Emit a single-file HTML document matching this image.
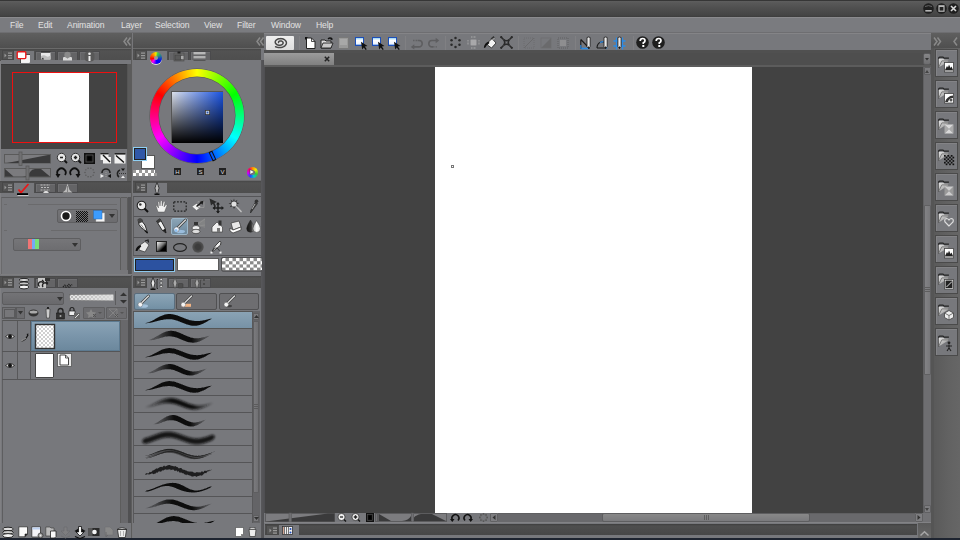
<!DOCTYPE html>
<html><head><meta charset="utf-8"><style>
*{margin:0;padding:0;box-sizing:border-box}
html,body{width:960px;height:540px;overflow:hidden;background:#1e2430;font-family:"Liberation Sans",sans-serif}
.a{position:absolute}
svg{position:absolute;overflow:visible}
</style></head><body>
<div class="a" style="left:0px;top:0px;width:960px;height:17px;background:linear-gradient(#363636 0,#363636 1px,#5e5e5e 1px,#585858 3px,#4c4c4c 10px,#454545 15px,#3c3c3c 17px)"></div>
<svg style="left:923px;top:3px" width="11" height="11" viewBox="0 0 11 11"><circle cx="5.5" cy="5.5" r="5.3" fill="#1f1f1f"/><path d="M2 3.5 Q5.5 1.8 9 3.5" stroke="#666" stroke-width="1" fill="none"/><rect x="2.3" y="7" width="6.4" height="1.6" fill="#b5b5b5"/></svg>
<svg style="left:935.5px;top:3px" width="11" height="11" viewBox="0 0 11 11"><circle cx="5.5" cy="5.5" r="5.3" fill="#1f1f1f"/><rect x="3" y="2.8" width="5" height="5.4" fill="#222" stroke="#b8b8b8" stroke-width="1.2"/><rect x="3" y="2.8" width="5" height="1.2" fill="#b8b8b8"/></svg>
<svg style="left:948px;top:3px" width="11" height="11" viewBox="0 0 11 11"><circle cx="5.5" cy="5.5" r="5.3" fill="#1f1f1f"/><path d="M3 3 L8 8 M8 3 L3 8" stroke="#d8d8d8" stroke-width="1.6"/></svg>
<div class="a" style="left:0px;top:17px;width:960px;height:16px;background:#7a7b7f;border-top:1px solid #8a8a8d;border-bottom:1px solid #6e6e71"></div>
<div class="a" style="left:10px;top:19.8px;font-size:8.6px;color:#e2e2e2;letter-spacing:-0.1px;line-height:11px">File</div>
<div class="a" style="left:38px;top:19.8px;font-size:8.6px;color:#e2e2e2;letter-spacing:-0.1px;line-height:11px">Edit</div>
<div class="a" style="left:67px;top:19.8px;font-size:8.6px;color:#e2e2e2;letter-spacing:-0.1px;line-height:11px">Animation</div>
<div class="a" style="left:121px;top:19.8px;font-size:8.6px;color:#e2e2e2;letter-spacing:-0.1px;line-height:11px">Layer</div>
<div class="a" style="left:155px;top:19.8px;font-size:8.6px;color:#e2e2e2;letter-spacing:-0.1px;line-height:11px">Selection</div>
<div class="a" style="left:204px;top:19.8px;font-size:8.6px;color:#e2e2e2;letter-spacing:-0.1px;line-height:11px">View</div>
<div class="a" style="left:237px;top:19.8px;font-size:8.6px;color:#e2e2e2;letter-spacing:-0.1px;line-height:11px">Filter</div>
<div class="a" style="left:271px;top:19.8px;font-size:8.6px;color:#e2e2e2;letter-spacing:-0.1px;line-height:11px">Window</div>
<div class="a" style="left:316px;top:19.8px;font-size:8.6px;color:#e2e2e2;letter-spacing:-0.1px;line-height:11px">Help</div>
<div class="a" style="left:0px;top:33px;width:131px;height:15px;background:linear-gradient(#5f5f5f,#4f4f4f)"></div>
<div class="a" style="left:133px;top:33px;width:131px;height:15px;background:linear-gradient(#5f5f5f,#4f4f4f)"></div>
<div class="a" style="left:931px;top:33px;width:29px;height:15px;background:linear-gradient(#5f5f5f,#4f4f4f)"></div>
<svg style="left:123px;top:37px" width="8" height="9" viewBox="0 0 8 9"><path d="M4 0.5 L1 4.5 L4 8.5 M7.5 0.5 L4.5 4.5 L7.5 8.5" stroke="#8a8a8a" stroke-width="1.5" fill="none"/></svg>
<svg style="left:256px;top:37px" width="8" height="9" viewBox="0 0 8 9"><path d="M4 0.5 L1 4.5 L4 8.5 M7.5 0.5 L4.5 4.5 L7.5 8.5" stroke="#8a8a8a" stroke-width="1.5" fill="none"/></svg>
<svg style="left:933px;top:37px" width="8" height="9" viewBox="0 0 8 9"><path d="M1 0.5 L4 4.5 L1 8.5 M4.5 0.5 L7.5 4.5 L4.5 8.5" stroke="#8a8a8a" stroke-width="1.5" fill="none"/></svg>
<svg style="left:953px;top:37px" width="5" height="9" viewBox="0 0 5 9"><path d="M4 0.5 L1 4.5 L4 8.5" stroke="#8a8a8a" stroke-width="1.5" fill="none"/></svg>
<div class="a" style="left:0px;top:48px;width:131px;height:490px;background:#77787c;border-left:1px solid #808083"></div>
<div class="a" style="left:133px;top:48px;width:131px;height:490px;background:#77787c"></div>
<div class="a" style="left:131px;top:33px;width:2px;height:505px;background:#77777a;border-left:1px solid #5c5c5c"></div>
<div class="a" style="left:261px;top:60px;width:4px;height:478px;background:linear-gradient(90deg,#58585b,#4e4e51)"></div>
<div class="a" style="left:263.5px;top:33px;width:1.5px;height:33px;background:#6d6d6d"></div>
<div class="a" style="left:0px;top:48px;width:131px;height:1px;background:#6a6a6a"></div>
<div class="a" style="left:0px;top:49px;width:131px;height:12px;background:linear-gradient(#474747,#525252 2px,#4e4e4e)"></div>
<div class="a" style="left:1.5px;top:50px;width:12px;height:10px;background:#545454;border:1px solid #484848"></div>
<svg style="left:3px;top:51px" width="10" height="8" viewBox="0 0 10 8"><path d="M1.5 2.5 L3.5 4.5 L1.5 6.5Z" fill="#9a9a9a"/><rect x="5" y="1.5" width="4" height="1.2" fill="#9a9a9a"/><rect x="5" y="4" width="4" height="1.2" fill="#9a9a9a"/><rect x="5" y="6.5" width="4" height="1.2" fill="#9a9a9a"/></svg>
<div class="a" style="left:14px;top:50.5px;width:20px;height:12.5px;background:#77787c"></div>
<div class="a" style="left:35px;top:50.5px;width:21px;height:10px;background:#646466;border:1px solid #4a4a4c;box-shadow:inset 1px 1px 0 #6e6e70"></div>
<div class="a" style="left:57px;top:50.5px;width:21px;height:10px;background:#646466;border:1px solid #4a4a4c;box-shadow:inset 1px 1px 0 #6e6e70"></div>
<div class="a" style="left:79px;top:50.5px;width:21px;height:10px;background:#646466;border:1px solid #4a4a4c;box-shadow:inset 1px 1px 0 #6e6e70"></div>
<div class="a" style="left:0px;top:181px;width:131px;height:12px;background:linear-gradient(#474747,#525252 2px,#4e4e4e)"></div>
<div class="a" style="left:1.5px;top:182px;width:12px;height:10px;background:#545454;border:1px solid #484848"></div>
<svg style="left:3px;top:183px" width="10" height="8" viewBox="0 0 10 8"><path d="M1.5 2.5 L3.5 4.5 L1.5 6.5Z" fill="#9a9a9a"/><rect x="5" y="1.5" width="4" height="1.2" fill="#9a9a9a"/><rect x="5" y="4" width="4" height="1.2" fill="#9a9a9a"/><rect x="5" y="6.5" width="4" height="1.2" fill="#9a9a9a"/></svg>
<div class="a" style="left:14px;top:182.5px;width:20px;height:12.5px;background:#77787c"></div>
<div class="a" style="left:35px;top:182.5px;width:21px;height:10px;background:#646466;border:1px solid #4a4a4c;box-shadow:inset 1px 1px 0 #6e6e70"></div>
<div class="a" style="left:57px;top:182.5px;width:21px;height:10px;background:#646466;border:1px solid #4a4a4c;box-shadow:inset 1px 1px 0 #6e6e70"></div>
<div class="a" style="left:0px;top:276px;width:131px;height:12px;background:linear-gradient(#474747,#525252 2px,#4e4e4e)"></div>
<div class="a" style="left:1.5px;top:277px;width:12px;height:10px;background:#545454;border:1px solid #484848"></div>
<svg style="left:3px;top:278px" width="10" height="8" viewBox="0 0 10 8"><path d="M1.5 2.5 L3.5 4.5 L1.5 6.5Z" fill="#9a9a9a"/><rect x="5" y="1.5" width="4" height="1.2" fill="#9a9a9a"/><rect x="5" y="4" width="4" height="1.2" fill="#9a9a9a"/><rect x="5" y="6.5" width="4" height="1.2" fill="#9a9a9a"/></svg>
<div class="a" style="left:14px;top:277.5px;width:20px;height:12.5px;background:#77787c"></div>
<div class="a" style="left:35px;top:277.5px;width:21px;height:10px;background:#646466;border:1px solid #4a4a4c;box-shadow:inset 1px 1px 0 #6e6e70"></div>
<div class="a" style="left:57px;top:277.5px;width:21px;height:10px;background:#646466;border:1px solid #4a4a4c;box-shadow:inset 1px 1px 0 #6e6e70"></div>
<div class="a" style="left:133px;top:48px;width:128px;height:1px;background:#6a6a6a"></div>
<div class="a" style="left:133px;top:49px;width:128px;height:12px;background:linear-gradient(#474747,#525252 2px,#4e4e4e)"></div>
<div class="a" style="left:134.5px;top:50px;width:12px;height:10px;background:#545454;border:1px solid #484848"></div>
<svg style="left:136px;top:51px" width="10" height="8" viewBox="0 0 10 8"><path d="M1.5 2.5 L3.5 4.5 L1.5 6.5Z" fill="#9a9a9a"/><rect x="5" y="1.5" width="4" height="1.2" fill="#9a9a9a"/><rect x="5" y="4" width="4" height="1.2" fill="#9a9a9a"/><rect x="5" y="6.5" width="4" height="1.2" fill="#9a9a9a"/></svg>
<div class="a" style="left:147px;top:50.5px;width:20px;height:12.5px;background:#77787c"></div>
<div class="a" style="left:168px;top:50.5px;width:21px;height:10px;background:#646466;border:1px solid #4a4a4c;box-shadow:inset 1px 1px 0 #6e6e70"></div>
<div class="a" style="left:190px;top:50.5px;width:21px;height:10px;background:#646466;border:1px solid #4a4a4c;box-shadow:inset 1px 1px 0 #6e6e70"></div>
<div class="a" style="left:133px;top:181px;width:128px;height:12px;background:linear-gradient(#474747,#525252 2px,#4e4e4e)"></div>
<div class="a" style="left:134.5px;top:182px;width:12px;height:10px;background:#545454;border:1px solid #484848"></div>
<svg style="left:136px;top:183px" width="10" height="8" viewBox="0 0 10 8"><path d="M1.5 2.5 L3.5 4.5 L1.5 6.5Z" fill="#9a9a9a"/><rect x="5" y="1.5" width="4" height="1.2" fill="#9a9a9a"/><rect x="5" y="4" width="4" height="1.2" fill="#9a9a9a"/><rect x="5" y="6.5" width="4" height="1.2" fill="#9a9a9a"/></svg>
<div class="a" style="left:147px;top:182.5px;width:20px;height:12.5px;background:#77787c"></div>
<div class="a" style="left:133px;top:276px;width:128px;height:12px;background:linear-gradient(#474747,#525252 2px,#4e4e4e)"></div>
<div class="a" style="left:134.5px;top:277px;width:12px;height:10px;background:#545454;border:1px solid #484848"></div>
<svg style="left:136px;top:278px" width="10" height="8" viewBox="0 0 10 8"><path d="M1.5 2.5 L3.5 4.5 L1.5 6.5Z" fill="#9a9a9a"/><rect x="5" y="1.5" width="4" height="1.2" fill="#9a9a9a"/><rect x="5" y="4" width="4" height="1.2" fill="#9a9a9a"/><rect x="5" y="6.5" width="4" height="1.2" fill="#9a9a9a"/></svg>
<div class="a" style="left:147px;top:277.5px;width:20px;height:12.5px;background:#77787c"></div>
<div class="a" style="left:168px;top:277.5px;width:21px;height:10px;background:#646466;border:1px solid #4a4a4c;box-shadow:inset 1px 1px 0 #6e6e70"></div>
<div class="a" style="left:190px;top:277.5px;width:21px;height:10px;background:#646466;border:1px solid #4a4a4c;box-shadow:inset 1px 1px 0 #6e6e70"></div>
<div class="a" style="left:1px;top:60px;width:130px;height:4px;background:#77787c"></div>
<div class="a" style="left:1px;top:64px;width:126px;height:85px;background:#434343;border-top:1px solid #3a3a3a"></div>
<div class="a" style="left:127px;top:64px;width:4px;height:117px;background:#5b5b5b;border-left:1px solid #555"></div>
<div class="a" style="left:39px;top:73px;width:50px;height:70px;background:#fff"></div>
<div class="a" style="left:12px;top:72px;width:105px;height:71px;border:1.3px solid #ee1010"></div>
<svg style="left:4px;top:152px" width="47" height="14" viewBox="0 0 47 14"><rect x="0.5" y="2.5" width="46" height="8.5" fill="#7b7b7e" stroke="#5a5a5a"/><path d="M3 11 L44 3 L46 3 L46 11Z" fill="#3a3a3b"/><rect x="15" y="0" width="3" height="13.5" fill="#707072" stroke="#5a5a5a" stroke-width="0.8"/></svg>
<svg style="left:4px;top:166px" width="47" height="14" viewBox="0 0 47 14"><rect x="0.5" y="2.5" width="46" height="8.5" fill="#3a3a3b" stroke="#5a5a5a"/><path d="M1 3 L9.5 10.5 L18 10.5 Q24 10.5 26 6 Q28 3 31 3 Z M37 3 L46 10.5 V3Z" fill="#7b7b7e"/><rect x="22" y="0" width="3" height="14" fill="#707072" stroke="#5a5a5a" stroke-width="0.8"/></svg>
<svg style="left:56px;top:152px" width="12" height="12" viewBox="0 0 12 12"><circle cx="5.5" cy="5.5" r="4.2" fill="#e8e8e8" stroke="#333" stroke-width="1"/><path d="M8.5 8.5 L11 11" stroke="#111" stroke-width="1.8"/><g stroke="#222" stroke-width="1.6"><path d="M4 5.5 H7"/></g></svg>
<svg style="left:70px;top:152px" width="12" height="12" viewBox="0 0 12 12"><circle cx="5.5" cy="5.5" r="4.2" fill="#e8e8e8" stroke="#333" stroke-width="1"/><path d="M8.5 8.5 L11 11" stroke="#111" stroke-width="1.8"/><g stroke="#222" stroke-width="1.6"><path d="M3.8 5.5 H7.2 M5.5 3.8 V7.2"/></g></svg>
<svg style="left:84px;top:153px" width="11" height="11" viewBox="0 0 11 11"><rect x="0" y="0" width="11" height="11" fill="#111"/><rect x="2" y="2" width="7" height="7" fill="none" stroke="#555" stroke-width="0.8"/><rect x="3.5" y="3.5" width="4" height="4" fill="#000"/></svg>
<svg style="left:100px;top:153px" width="12" height="11" viewBox="0 0 12 11"><rect x="0.5" y="1" width="8" height="6" fill="#eee"/><rect x="0.5" y="0" width="8" height="1.4" fill="#222"/><rect x="3" y="4" width="8" height="6.5" fill="#f2f2f2"/><path d="M3 2 L10 9" stroke="#111" stroke-width="1.4"/></svg>
<svg style="left:114px;top:153px" width="12" height="11" viewBox="0 0 12 11"><rect x="0.5" y="0.5" width="11" height="10" fill="#f0f0f0"/><rect x="0.5" y="0" width="11" height="1.6" fill="#222"/><path d="M2 2.5 L10 9.5" stroke="#111" stroke-width="1.4"/></svg>
<svg style="left:55px;top:167px" width="12" height="12" viewBox="0 0 12 12"><g><path d="M3 8 A4.2 4.2 0 1 1 10 8" stroke="#111" stroke-width="1.8" fill="none"/><path d="M0.5 7 L5.5 7 L3 11Z" fill="#111"/></g></svg>
<svg style="left:69px;top:167px" width="12" height="12" viewBox="0 0 12 12"><g transform="translate(12,0) scale(-1,1)"><path d="M3 8 A4.2 4.2 0 1 1 10 8" stroke="#111" stroke-width="1.8" fill="none"/><path d="M0.5 7 L5.5 7 L3 11Z" fill="#111"/></g></svg>
<svg style="left:84px;top:167px" width="11" height="11" viewBox="0 0 11 11"><circle cx="10.00" cy="5.50" r="0.7" fill="#555"/><circle cx="9.14" cy="8.15" r="0.7" fill="#555"/><circle cx="6.89" cy="9.78" r="0.7" fill="#555"/><circle cx="4.11" cy="9.78" r="0.7" fill="#555"/><circle cx="1.86" cy="8.15" r="0.7" fill="#555"/><circle cx="1.00" cy="5.50" r="0.7" fill="#555"/><circle cx="1.86" cy="2.85" r="0.7" fill="#555"/><circle cx="4.11" cy="1.22" r="0.7" fill="#555"/><circle cx="6.89" cy="1.22" r="0.7" fill="#555"/><circle cx="9.14" cy="2.85" r="0.7" fill="#555"/></svg>
<svg style="left:100px;top:167px" width="12" height="12" viewBox="0 0 12 12"><path d="M2 6 A4 4 0 0 1 10 6" stroke="#222" stroke-width="1.6" fill="none"/><path d="M0.5 7 L4 9 L0.5 11Z" fill="#eee"/><path d="M11 7 L7.5 9 L11 11Z" fill="#111"/><path d="M6 5 V11" stroke="#999" stroke-width="1.2" stroke-dasharray="1 1"/></svg>
<svg style="left:114px;top:167px" width="12" height="12" viewBox="0 0 12 12"><path d="M5 10 A4 4 0 0 1 6 3" stroke="#222" stroke-width="1.6" fill="none"/><path d="M7 1.5 L11 1.5 L9 4Z" fill="#111"/><path d="M7 11 L11 11 L9 8.5Z" fill="#eee"/><path d="M5 6.5 H12" stroke="#333" stroke-width="1" stroke-dasharray="1 1"/></svg>
<div class="a" style="left:127px;top:149px;width:4px;height:32px;background:#5b5b5b"></div>
<div class="a" style="left:1px;top:193px;width:130px;height:4px;background:#77787c"></div>
<div class="a" style="left:1px;top:197px;width:119px;height:77px;background:#77787c;border-top:1px solid #5e5e60;border-left:1px solid #6a6a6c"></div>
<div class="a" style="left:120px;top:197px;width:8px;height:77px;background:#727275;border:1px solid #5c5c5c;border-radius:1px"></div>
<div class="a" style="left:128px;top:197px;width:3px;height:77px;background:#555557"></div>
<div class="a" style="left:120px;top:270px;width:8px;height:4px;background:#77777a"></div>
<div class="a" style="left:4px;top:204px;width:3px;height:1px;background:#6a6a6c"></div>
<div class="a" style="left:28px;top:204px;width:89px;height:1px;background:#6a6a6c"></div>
<div class="a" style="left:4px;top:230px;width:3px;height:1px;background:#6a6a6c"></div>
<div class="a" style="left:51px;top:230px;width:66px;height:1px;background:#6a6a6c"></div>
<div class="a" style="left:57px;top:209px;width:61px;height:14px;background:linear-gradient(#747477,#6c6c6f);border:1px solid #5e5e60;border-radius:2px"></div>
<svg style="left:60px;top:210px" width="12" height="12" viewBox="0 0 12 12"><circle cx="6" cy="6" r="4.5" fill="#1a1a1a" stroke="#fff" stroke-width="1.6"/></svg>
<svg style="left:76px;top:211px" width="12" height="11" viewBox="0 0 12 11"><rect x="0" y="0" width="1" height="1" fill="#111"/><rect x="0" y="2" width="1" height="1" fill="#111"/><rect x="0" y="4" width="1" height="1" fill="#111"/><rect x="0" y="6" width="1" height="1" fill="#111"/><rect x="0" y="8" width="1" height="1" fill="#111"/><rect x="0" y="10" width="1" height="1" fill="#111"/><rect x="1" y="1" width="1" height="1" fill="#111"/><rect x="1" y="3" width="1" height="1" fill="#111"/><rect x="1" y="5" width="1" height="1" fill="#111"/><rect x="1" y="7" width="1" height="1" fill="#111"/><rect x="1" y="9" width="1" height="1" fill="#111"/><rect x="2" y="0" width="1" height="1" fill="#111"/><rect x="2" y="2" width="1" height="1" fill="#111"/><rect x="2" y="4" width="1" height="1" fill="#111"/><rect x="2" y="6" width="1" height="1" fill="#111"/><rect x="2" y="8" width="1" height="1" fill="#111"/><rect x="2" y="10" width="1" height="1" fill="#111"/><rect x="3" y="1" width="1" height="1" fill="#111"/><rect x="3" y="3" width="1" height="1" fill="#111"/><rect x="3" y="5" width="1" height="1" fill="#111"/><rect x="3" y="7" width="1" height="1" fill="#111"/><rect x="3" y="9" width="1" height="1" fill="#111"/><rect x="4" y="0" width="1" height="1" fill="#111"/><rect x="4" y="2" width="1" height="1" fill="#111"/><rect x="4" y="4" width="1" height="1" fill="#111"/><rect x="4" y="6" width="1" height="1" fill="#111"/><rect x="4" y="8" width="1" height="1" fill="#111"/><rect x="4" y="10" width="1" height="1" fill="#111"/><rect x="5" y="1" width="1" height="1" fill="#111"/><rect x="5" y="3" width="1" height="1" fill="#111"/><rect x="5" y="5" width="1" height="1" fill="#111"/><rect x="5" y="7" width="1" height="1" fill="#111"/><rect x="5" y="9" width="1" height="1" fill="#111"/><rect x="6" y="0" width="1" height="1" fill="#111"/><rect x="6" y="2" width="1" height="1" fill="#111"/><rect x="6" y="4" width="1" height="1" fill="#111"/><rect x="6" y="6" width="1" height="1" fill="#111"/><rect x="6" y="8" width="1" height="1" fill="#111"/><rect x="6" y="10" width="1" height="1" fill="#111"/><rect x="7" y="1" width="1" height="1" fill="#111"/><rect x="7" y="3" width="1" height="1" fill="#111"/><rect x="7" y="5" width="1" height="1" fill="#111"/><rect x="7" y="7" width="1" height="1" fill="#111"/><rect x="7" y="9" width="1" height="1" fill="#111"/><rect x="8" y="0" width="1" height="1" fill="#111"/><rect x="8" y="2" width="1" height="1" fill="#111"/><rect x="8" y="4" width="1" height="1" fill="#111"/><rect x="8" y="6" width="1" height="1" fill="#111"/><rect x="8" y="8" width="1" height="1" fill="#111"/><rect x="8" y="10" width="1" height="1" fill="#111"/><rect x="9" y="1" width="1" height="1" fill="#111"/><rect x="9" y="3" width="1" height="1" fill="#111"/><rect x="9" y="5" width="1" height="1" fill="#111"/><rect x="9" y="7" width="1" height="1" fill="#111"/><rect x="9" y="9" width="1" height="1" fill="#111"/><rect x="10" y="0" width="1" height="1" fill="#111"/><rect x="10" y="2" width="1" height="1" fill="#111"/><rect x="10" y="4" width="1" height="1" fill="#111"/><rect x="10" y="6" width="1" height="1" fill="#111"/><rect x="10" y="8" width="1" height="1" fill="#111"/><rect x="10" y="10" width="1" height="1" fill="#111"/><rect x="11" y="1" width="1" height="1" fill="#111"/><rect x="11" y="3" width="1" height="1" fill="#111"/><rect x="11" y="5" width="1" height="1" fill="#111"/><rect x="11" y="7" width="1" height="1" fill="#111"/><rect x="11" y="9" width="1" height="1" fill="#111"/></svg>
<svg style="left:93px;top:210px" width="12" height="12" viewBox="0 0 12 12"><rect x="3" y="3" width="8.5" height="8.5" fill="#f4f4f4" stroke="#bbb" stroke-width="0.5"/><rect x="0.5" y="0.5" width="8.5" height="8.5" fill="#3c9cff" stroke="#2a6ab0" stroke-width="0.5"/></svg>
<svg style="left:109px;top:214px" width="6" height="4" viewBox="0 0 6 4"><path d="M0 0 H6 L3 4Z" fill="#333"/></svg>
<div class="a" style="left:13px;top:238px;width:68px;height:13px;background:linear-gradient(#767679,#6d6d70);border:1px solid #5e5e60;border-radius:2px"></div>
<div class="a" style="left:28px;top:239px;width:3.5px;height:10px;background:#f07575"></div>
<div class="a" style="left:31.5px;top:239px;width:3.5px;height:10px;background:#75a8f5"></div>
<div class="a" style="left:35px;top:239px;width:3.5px;height:10px;background:#78e078"></div>
<svg style="left:72px;top:243px" width="6" height="4" viewBox="0 0 6 4"><path d="M0 0 H6 L3 4Z" fill="#333"/></svg>
<div class="a" style="left:0px;top:274px;width:131px;height:2px;background:#77787c"></div>
<div class="a" style="left:1px;top:274px;width:131px;height:1px;background:#7e7e80"></div>
<div class="a" style="left:1px;top:288px;width:130px;height:3px;background:#77787c"></div>
<div class="a" style="left:2px;top:292px;width:62px;height:13px;background:linear-gradient(#737376,#69696c);border:1px solid #5c5c5e;border-radius:2px"></div>
<svg style="left:57px;top:297px" width="6" height="4" viewBox="0 0 6 4"><path d="M0 0 H6 L3 4Z" fill="#333"/></svg>
<svg style="left:69px;top:294px" width="45" height="7" viewBox="0 0 45 7"><defs><pattern id="ck" width="4" height="4" patternUnits="userSpaceOnUse"><rect width="4" height="4" fill="#e6e6e6"/><rect width="2" height="2" fill="#b5b5b5"/><rect x="2" y="2" width="2" height="2" fill="#b5b5b5"/></pattern><linearGradient id="fadeg" x1="0" x2="1"><stop offset="0" stop-color="#ddd" stop-opacity="0"/><stop offset="1" stop-color="#ddd" stop-opacity="0.9"/></linearGradient></defs><rect x="0.5" y="0.5" width="44" height="6" fill="url(#ck)" stroke="#666" stroke-width="0.6"/><rect x="0.5" y="0.5" width="44" height="6" fill="url(#fadeg)"/></svg>
<div class="a" style="left:114.5px;top:291px;width:1px;height:14px;background:#5c5c5e"></div>
<svg style="left:119px;top:292px" width="9" height="12" viewBox="0 0 9 12"><path d="M4.5 0.5 L8 4 H1Z M4.5 11.5 L8 8 H1Z" fill="#333"/></svg>
<div class="a" style="left:2px;top:307px;width:14px;height:12px;background:#727275;border:1px solid #5a5a5c"></div>
<div class="a" style="left:3.5px;top:308.5px;width:11px;height:9px;background:#77777a;border:1px solid #5a5a5c"></div>
<div class="a" style="left:16px;top:307px;width:9px;height:12px;background:#6c6c6f;border:1px solid #5a5a5c"></div>
<svg style="left:18px;top:311px" width="5" height="4" viewBox="0 0 5 4"><path d="M0 0 H5 L2.5 3.5Z" fill="#333"/></svg>
<svg style="left:28px;top:309px" width="11" height="8" viewBox="0 0 11 8"><ellipse cx="5.5" cy="4" rx="5" ry="3.5" fill="#333"/><ellipse cx="5.5" cy="3" rx="4" ry="1.5" fill="#aaa"/></svg>
<svg style="left:45px;top:307px" width="6" height="12" viewBox="0 0 6 12"><rect x="2" y="0" width="2" height="2" fill="#222"/><path d="M1 2 H5 L4.5 11 H1.5Z" fill="#ccc" stroke="#333" stroke-width="0.6"/></svg>
<svg style="left:55px;top:307px" width="11" height="12" viewBox="0 0 11 12"><path d="M3 6 V4 A2.5 2.5 0 0 1 8 4 V6" stroke="#222" stroke-width="1.3" fill="none"/><rect x="1.5" y="6" width="8" height="6" fill="#333" stroke="#111" stroke-width="0.5"/><circle cx="5.5" cy="9" r="1" fill="#aaa"/></svg>
<svg style="left:68px;top:306px" width="13" height="13" viewBox="0 0 13 13"><path d="M2 5 V3.5 A2 2 0 0 1 6 3.5 V5" stroke="#222" stroke-width="1.1" fill="none"/><rect x="1" y="5" width="6" height="4.5" fill="#eee" stroke="#222" stroke-width="0.7"/><rect x="6" y="7" width="6" height="6" fill="#666"/><path d="M7 12 L11 8" stroke="#ddd" stroke-width="1"/></svg>
<div class="a" style="left:82.5px;top:307px;width:22px;height:12px;background:#6d6d70;border:1px solid #5e5e60;border-radius:1px"></div>
<svg style="left:85px;top:308px" width="18" height="10" viewBox="0 0 18 10"><path d="M6 1 L7.5 4 L11 4.5 L8.5 7 L9 10 L6 8.5 L3 10 L3.5 7 L1 4.5 L4.5 4Z" fill="#888"/><path d="M8 6 L11 9 M11 6 L8 9" stroke="#555" stroke-width="1"/><path d="M13 4 H17 L15 6Z" fill="#555"/></svg>
<div class="a" style="left:106px;top:307px;width:21px;height:12px;background:#6d6d70;border:1px solid #5e5e60;border-radius:1px"></div>
<svg style="left:108px;top:308px" width="18" height="10" viewBox="0 0 18 10"><path d="M1 1 H9 V9 Z" fill="none" stroke="#888" stroke-width="0.8"/><path d="M9 1 L1 9" stroke="#888" stroke-width="0.8"/><path d="M7 6 L10 9 M10 6 L7 9" stroke="#555" stroke-width="1"/><path d="M12 4 H16 L14 6Z" fill="#555"/></svg>
<div class="a" style="left:2px;top:320px;width:118px;height:204px;background:#77787c;border-top:1px solid #555;border-left:1px solid #5e5e60"></div>
<div class="a" style="left:120px;top:320px;width:8px;height:204px;background:#68686b;border-left:1px solid #5c5c5c"></div>
<div class="a" style="left:128px;top:288px;width:3px;height:250px;background:#505052"></div>
<div class="a" style="left:2px;top:350.5px;width:118px;height:1px;background:#555557"></div>
<div class="a" style="left:2px;top:378.5px;width:118px;height:1px;background:#555557"></div>
<div class="a" style="left:17px;top:321px;width:1px;height:58px;background:#58585a"></div>
<div class="a" style="left:30px;top:321px;width:1px;height:58px;background:#58585a"></div>
<div class="a" style="left:31px;top:321px;width:89px;height:29.5px;background:linear-gradient(#8aa3b6,#7a95aa 50%,#6c889d);border:1px solid #5d7a90"></div>
<svg style="left:35px;top:324px" width="20" height="25" viewBox="0 0 20 25"><defs><pattern id="ck2" width="4" height="4" patternUnits="userSpaceOnUse"><rect width="4" height="4" fill="#fff"/><rect width="2" height="2" fill="#d0d0d0"/><rect x="2" y="2" width="2" height="2" fill="#d0d0d0"/></pattern></defs><rect x="0.5" y="0.5" width="19" height="24" fill="url(#ck2)" stroke="#333" stroke-width="1.4"/></svg>
<svg style="left:5px;top:333px" width="10" height="7" viewBox="0 0 10 7"><path d="M0.5 3.5 Q5 -0.5 9.5 3.5 Q5 7.5 0.5 3.5Z" fill="#ddd" stroke="#222" stroke-width="0.8"/><circle cx="5" cy="3.5" r="2" fill="#111"/></svg>
<svg style="left:5px;top:362px" width="10" height="7" viewBox="0 0 10 7"><path d="M0.5 3.5 Q5 -0.5 9.5 3.5 Q5 7.5 0.5 3.5Z" fill="#ddd" stroke="#222" stroke-width="0.8"/><circle cx="5" cy="3.5" r="2" fill="#111"/></svg>
<svg style="left:20px;top:333px" width="9" height="9" viewBox="0 0 9 9"><path d="M1 8 Q5 8 8 2" stroke="#111" stroke-width="1.2" fill="none"/><path d="M6.5 1 L8.5 0.5 L8 3Z" fill="#111"/><path d="M1 8 Q4 7 6 5" stroke="#eee" stroke-width="0.6" fill="none"/></svg>
<div class="a" style="left:35px;top:353px;width:19px;height:25px;background:#fff;border:1px solid #444;border-radius:1px"></div>
<svg style="left:57px;top:353px" width="15" height="14" viewBox="0 0 15 14"><rect x="0.5" y="0.5" width="14" height="13" fill="#e8e8e8" stroke="#555" stroke-width="0.8"/><path d="M3 2 H8.5 L11.5 5 V12 H3Z" fill="#fff" stroke="#333" stroke-width="0.9"/><path d="M8.5 2 V5 H11.5" stroke="#333" stroke-width="0.8" fill="none"/></svg>
<div class="a" style="left:0px;top:523px;width:131px;height:15px;background:#77787c"></div>
<svg style="left:2px;top:526px" width="12" height="12" viewBox="0 0 12 12"><ellipse cx="6" cy="3" rx="5.3" ry="1.8" fill="#ddd" stroke="#1a1a1a" stroke-width="0.9"/><ellipse cx="6" cy="6.3" rx="5.3" ry="1.8" fill="#ccc" stroke="#1a1a1a" stroke-width="0.9"/><ellipse cx="6" cy="9.6" rx="5.3" ry="2" fill="#f4f4f4" stroke="#1a1a1a" stroke-width="0.9"/></svg>
<svg style="left:18px;top:526px" width="12" height="12" viewBox="0 0 12 12"><path d="M0.8 0.8 H9.5 V8 L7 10.8 H0.8Z" fill="#fafafa" stroke="#333" stroke-width="0.8"/><path d="M7 10.8 V8 H9.5" fill="#222" stroke="#222" stroke-width="0.6"/></svg>
<svg style="left:31px;top:526px" width="12" height="12" viewBox="0 0 12 12"><path d="M0.8 0.8 H9.5 V11 H0.8Z" fill="#f4f4f8" stroke="#333" stroke-width="0.8"/><rect x="1.5" y="1.5" width="7.5" height="2" fill="#bcd0f0"/><circle cx="9.5" cy="9.5" r="2.5" fill="#999" stroke="#222" stroke-width="0.6"/><circle cx="9.5" cy="9.5" r="0.9" fill="#eee"/></svg>
<svg style="left:45px;top:526px" width="12" height="12" viewBox="0 0 12 12"><path d="M0.8 1 H5 L6 2 H9 V10 H0.8Z" fill="#bbb" stroke="#444" stroke-width="0.7"/><path d="M5.5 5 H11 V10.5 L9.5 12 H5.5Z" fill="#fafafa" stroke="#222" stroke-width="0.8"/></svg>
<svg style="left:60px;top:526px" width="12" height="12" viewBox="0 0 12 12"><path d="M4 1 H7 V5 H10 L5.5 9.5 L1 5 H4Z" fill="#7e7e80" stroke="#6a6a6c" stroke-width="0.6"/><path d="M1 10 L5.5 12 L10 10" stroke="#6e6e70" stroke-width="1" fill="none"/></svg>
<svg style="left:74px;top:526px" width="12" height="12" viewBox="0 0 12 12"><path d="M0.5 5 L6 1.5 L11.5 5 L6 8.5Z" fill="#111"/><path d="M4.5 0.5 H7.5 V6 H10 L6 10 L2 6 H4.5Z" fill="#f4f4f4" stroke="#111" stroke-width="0.8"/><path d="M1 10.5 L6 12.5 L11 10.5" stroke="#111" stroke-width="1.2" fill="none"/></svg>
<svg style="left:88px;top:526px" width="12" height="12" viewBox="0 0 12 12"><rect x="0.5" y="2" width="11" height="8" fill="#2a2a2a"/><rect x="0.5" y="2" width="4" height="8" fill="#555"/><circle cx="6.5" cy="6" r="2.3" fill="#f4f4f4"/></svg>
<svg style="left:103px;top:526px" width="12" height="12" viewBox="0 0 12 12"><path d="M2 1 H7 L10 4 V9 H2Z" fill="#888" stroke="#6e6e70" stroke-width="0.5"/><path d="M3 6 V11 L5 9" stroke="#6a6a6c" stroke-width="1" fill="none"/></svg>
<svg style="left:116px;top:526px" width="12" height="12" viewBox="0 0 12 12"><path d="M1.5 3.5 H10.5 L9.3 11.5 H2.7Z" fill="#ececec" stroke="#2a2a2a" stroke-width="0.8"/><path d="M1 3.5 Q6 0 11 3.5Z" fill="#ddd" stroke="#2a2a2a" stroke-width="0.8"/><path d="M4.5 5 V10 M7.5 5 V10" stroke="#888" stroke-width="0.6"/></svg>
<div class="a" style="left:133px;top:60px;width:128px;height:121px;background:#77787c"></div>
<div class="a" style="left:150px;top:68.5px;width:94px;height:94px;border-radius:50%;background:conic-gradient(from 0deg,#ff0 0deg,#0f0 60deg,#0ff 120deg,#00f 180deg,#f0f 240deg,#f00 300deg,#ff0 360deg);box-shadow:0 0 0 0.5px #555"></div>
<div class="a" style="left:158.8px;top:77.3px;width:76.4px;height:76.4px;border-radius:50%;background:#77787c;box-shadow:0 0 0 0.5px #555"></div>
<div class="a" style="left:149.5px;top:51.5px;width:12px;height:12px;border-radius:50%;background:conic-gradient(from 20deg,#4c4 0deg,#00f 110deg,#00f 150deg,#f0f 200deg,#f00 240deg,#f80 300deg,#ee0 340deg,#4c4 360deg);box-shadow:0 1px 0 #ddd"></div>
<div class="a" style="left:153.5px;top:55.5px;width:4px;height:4px;border-radius:50%;background:#999"></div>
<div class="a" style="left:171px;top:91px;width:52px;height:52px;background:linear-gradient(to bottom,rgba(0,0,0,0),#000),linear-gradient(to right,#e4e8f0,#1a54e6);box-shadow:inset 1px 1px 0 #555"></div>
<svg style="left:204.5px;top:109.5px" width="5" height="5" viewBox="0 0 5 5"><rect x="0" y="0" width="5" height="5" fill="#333"/><rect x="0.8" y="0.8" width="3.4" height="3.4" fill="#d0d8e8"/><rect x="1.6" y="1.6" width="1.8" height="1.8" fill="#2a5ab8"/></svg>
<svg style="left:209px;top:151px" width="8" height="10" viewBox="0 0 8 10"><rect x="2" y="0.5" width="3" height="9" fill="none" stroke="#111" stroke-width="1" transform="rotate(-25 3.5 5)"/></svg>
<div class="a" style="left:141px;top:155px;width:14px;height:14px;background:#fff;border:1px solid #555"></div>
<div class="a" style="left:133px;top:147px;width:14px;height:14px;background:#3058a8;border:1.5px solid #8fd0f5;box-shadow:inset 0 0 0 1px #222"></div>
<svg style="left:133px;top:170px" width="22" height="6" viewBox="0 0 22 6"><rect width="22" height="6" fill="#fff"/><rect x="0" y="0" width="3" height="3" fill="#999"/><rect x="3" y="3" width="3" height="3" fill="#999"/><rect x="6" y="0" width="3" height="3" fill="#999"/><rect x="9" y="3" width="3" height="3" fill="#999"/><rect x="12" y="0" width="3" height="3" fill="#999"/><rect x="15" y="3" width="3" height="3" fill="#999"/><rect x="18" y="0" width="3" height="3" fill="#999"/><rect x="21" y="3" width="3" height="3" fill="#999"/></svg>
<svg style="left:174px;top:168px" width="7" height="7" viewBox="0 0 7 7"><rect x="0" y="0" width="7" height="7" fill="#222"/><text x="3.5" y="6" font-size="6" font-family="Liberation Sans" fill="#ddd" text-anchor="middle">H</text></svg>
<svg style="left:196.5px;top:168px" width="7" height="7" viewBox="0 0 7 7"><rect x="0" y="0" width="7" height="7" fill="#222"/><text x="3.5" y="6" font-size="6" font-family="Liberation Sans" fill="#ddd" text-anchor="middle">S</text></svg>
<svg style="left:218.5px;top:168px" width="7" height="7" viewBox="0 0 7 7"><rect x="0" y="0" width="7" height="7" fill="#222"/><text x="3.5" y="6" font-size="6" font-family="Liberation Sans" fill="#ddd" text-anchor="middle">V</text></svg>
<div class="a" style="left:246.5px;top:166.5px;width:11px;height:11px;border-radius:50%;background:conic-gradient(#f80,#ee0 50deg,#3c3 110deg,#0cc 160deg,#24f 210deg,#c0f 260deg,#f05 320deg,#f80)"></div>
<div class="a" style="left:249.5px;top:169.5px;width:5px;height:5px;border-radius:50%;background:#77787c"></div>
<svg style="left:249px;top:169px" width="6" height="6" viewBox="0 0 6 6"><path d="M1 0.5 L5.5 3 L1 5.5Z" fill="#fff" stroke="#333" stroke-width="0.5"/></svg>
<div class="a" style="left:133px;top:180px;width:128px;height:1px;background:#6a6a6c"></div>
<div class="a" style="left:133px;top:193px;width:128px;height:4px;background:#77787c"></div>
<div class="a" style="left:133px;top:196px;width:128px;height:20px;border-top:1px solid #555558;border-left:1px solid #5c5c5e"></div>
<div class="a" style="left:133px;top:216px;width:128px;height:21px;border-top:1px solid #555558;border-left:1px solid #5c5c5e"></div>
<div class="a" style="left:133px;top:237px;width:128px;height:18px;border-top:1px solid #555558;border-left:1px solid #5c5c5e"></div>
<div class="a" style="left:133px;top:255px;width:128px;height:1px;background:#555558"></div>
<div class="a" style="left:171px;top:217.5px;width:17px;height:17px;background:linear-gradient(#8ba4b6,#6d889c);border:1px solid #9cb6c8;border-radius:2px"></div>
<svg style="left:136px;top:200px" width="13" height="13" viewBox="0 0 13 13"><circle cx="5.5" cy="5.5" r="4.3" fill="#eee" stroke="#222" stroke-width="1.1"/><circle cx="4.3" cy="4.5" r="1.3" fill="#333"/><path d="M8.5 8.5 L12 12" stroke="#111" stroke-width="2"/></svg>
<svg style="left:155px;top:200px" width="13" height="13" viewBox="0 0 13 13"><path d="M3 12 L1 6 Q1 5 2 5.5 L3.5 8 L3 2 Q3.5 1 4.5 2 L5 6 L5.5 0.8 Q6.5 0 7 1 L7.2 6 L8.5 1.5 Q9.5 1 10 2 L9 7 L11 4.5 Q12 4.5 12 5.5 L9.5 12Z" fill="#f2f2f2" stroke="#444" stroke-width="0.4"/></svg>
<svg style="left:173px;top:201px" width="14" height="11" viewBox="0 0 14 11"><rect x="0.8" y="0.8" width="12.4" height="9.4" fill="none" stroke="#222" stroke-width="1.2" stroke-dasharray="1.8 1.4"/></svg>
<svg style="left:191px;top:199px" width="15" height="13" viewBox="0 0 15 13"><path d="M1 7.5 L5.5 4.5 L10 8 L5.5 11.5Z" fill="#f2f2f2" stroke="#555" stroke-width="0.4"/><path d="M7 2.5 H13 V8.5 H7Z" fill="none" stroke="#999" stroke-width="0.8"/><path d="M5.5 7.5 L11 3" stroke="#1a1a1a" stroke-width="1.6"/><path d="M12.5 1.8 L8.5 2.8 L11.5 5.8Z" fill="#1a1a1a"/></svg>
<svg style="left:209px;top:198px" width="16" height="16" viewBox="0 0 16 16"><path d="M0.5 0.5 L8 4 L5.5 5 L7 8.5 L5.5 9.2 L4 5.8 L2 7.5Z" fill="#2a2a2a"/><path d="M9 5 V15 M4.5 10 H14" stroke="#1e1e1e" stroke-width="1.5"/><path d="M9 4 L7 6.5 H11Z M9 15.5 L7 13 H11Z M3.5 10 L6 8 V12Z M15 10 L12.5 8 V12Z" fill="#1e1e1e"/></svg>
<svg style="left:228px;top:198px" width="15" height="15" viewBox="0 0 15 15"><path d="M6 0.5 L6.8 3.5 L9.5 1.8 L8.3 4.6 L11.5 5 L8.8 6.5 L10.5 9.2 L7.5 8.3 L6 11 L4.8 8.2 L1.8 9.2 L3.4 6.5 L0.5 5.5 L3.6 4.4 L2.5 1.6 L5 3.4Z" fill="#333"/><circle cx="6" cy="6" r="2.6" fill="#e0e0e0"/><path d="M8 8 L13.5 14" stroke="#ddd" stroke-width="1.2"/><path d="M8 8 L13.5 14" stroke="#555" stroke-width="0.3"/></svg>
<svg style="left:249px;top:199px" width="10" height="15" viewBox="0 0 10 15"><circle cx="7.5" cy="2.2" r="1.8" fill="#333"/><path d="M6.5 3 L8.5 4.5 L3 12 L1.5 14 L1.8 11.5Z" fill="#444" stroke="#222" stroke-width="0.6"/><path d="M6 5 L3 10" stroke="#ddd" stroke-width="0.7"/></svg>
<svg style="left:136px;top:218px" width="13" height="16" viewBox="0 0 13 16"><path d="M2 1.5 Q4 0 6 1.5 L6.5 4 Q9.5 7 10 10 L11.5 15 L7.5 11.5 Q4.5 9.5 3 6.5Z" fill="#f2f2f2" stroke="#1e1e1e" stroke-width="0.9"/><path d="M2 1.5 Q4 0 6 1.5 L6.5 4 L3 5.5Z" fill="#444"/><path d="M5 6.5 L9 12" stroke="#555" stroke-width="0.7"/><path d="M9 12.5 L11.5 15" stroke="#111" stroke-width="1.4"/></svg>
<svg style="left:155px;top:218px" width="13" height="16" viewBox="0 0 13 16"><path d="M1.5 3 L5 0.8 L10 10 L11 15 L7 12Z" fill="#f0f0f0" stroke="#1e1e1e" stroke-width="0.9"/><path d="M1.5 3 L5 0.8 L6.3 3.2 L2.8 5.4Z" fill="#3a3a3a"/><path d="M7.5 12.3 L10.5 10.5 L11 15Z" fill="#1a1a1a"/></svg>
<svg style="left:172px;top:218px" width="16" height="16" viewBox="0 0 16 16"><ellipse cx="8" cy="13.5" rx="5" ry="1.8" fill="#a8ccf0" opacity="0.75"/><path d="M13.5 2 L6 9.5" stroke="#333" stroke-width="2.8" stroke-linecap="round"/><path d="M13.5 2 L6 9.5" stroke="#cfcfcf" stroke-width="1.6" stroke-linecap="round"/><circle cx="4.5" cy="11.5" r="2.6" fill="#eef4ff" stroke="#555" stroke-width="0.5"/><circle cx="4" cy="12.5" r="1.6" fill="#8fc0f0"/></svg>
<svg style="left:192px;top:218px" width="14" height="16" viewBox="0 0 14 16"><path d="M6 6 L13 1 M7 8 L13 7" stroke="#999" stroke-width="0.8"/><path d="M6 4 L13 0.5 L13 10 L7 8Z" fill="#8a8a8a" opacity="0.6"/><rect x="2" y="4" width="4" height="3" fill="#333"/><ellipse cx="4" cy="10" rx="4" ry="2.5" fill="#eee" stroke="#333" stroke-width="0.7"/><ellipse cx="4" cy="13.5" rx="4" ry="2.2" fill="#ddd" stroke="#333" stroke-width="0.7"/></svg>
<svg style="left:211px;top:220px" width="13" height="13" viewBox="0 0 13 13"><path d="M1 7 L6 2 L11.5 7 V12 H1Z" fill="#f0f0f0" stroke="#444" stroke-width="0.7"/><rect x="7.5" y="0.5" width="3" height="5" fill="#333"/><path d="M6 12 V8 H9 V12" fill="#777"/></svg>
<svg style="left:229px;top:220px" width="13" height="13" viewBox="0 0 13 13"><path d="M2 3 L10 1 L12 7 L4 10Z" fill="#e8e8e8" stroke="#333" stroke-width="0.7"/><path d="M1 8 L4 10 L12 7 L12 10 L4 13 L1 11Z" fill="#fff" stroke="#333" stroke-width="0.7"/></svg>
<svg style="left:246px;top:219px" width="15" height="14" viewBox="0 0 15 14"><defs><linearGradient id="dg1" x1="0" x2="1"><stop offset="0" stop-color="#111"/><stop offset="0.6" stop-color="#333"/><stop offset="1" stop-color="#ccc"/></linearGradient><linearGradient id="dg2" x1="0" x2="1"><stop offset="0" stop-color="#bbb"/><stop offset="0.5" stop-color="#fff"/><stop offset="1" stop-color="#ddd"/></linearGradient></defs><path d="M4.5 1 Q8.3 7 8.3 9.5 A3.8 3.8 0 0 1 0.7 9.5 Q0.7 7 4.5 1Z" fill="url(#dg1)" stroke="#222" stroke-width="0.4"/><path d="M10.5 1.5 Q14.5 7.5 14.5 9.6 A3.8 3.8 0 0 1 6.9 9.6 Q6.9 7.5 10.5 1.5Z" fill="url(#dg2)" stroke="#333" stroke-width="0.5"/></svg>
<svg style="left:136px;top:240px" width="14" height="13" viewBox="0 0 14 13"><path d="M4 5 L9 1.5 L13 5 L9 12 L3 10Z" fill="#e8e8e8" stroke="#333" stroke-width="0.7"/><path d="M0.5 11 Q1 7 5 6" stroke="#111" stroke-width="2"/><path d="M9 1 L12 0 L12.5 2.5" stroke="#222" stroke-width="1.3" fill="none"/></svg>
<div class="a" style="left:156px;top:241px;width:11px;height:11px;background:linear-gradient(135deg,#f4f4f4,#777 45%,#000 70%);border:1px solid #222"></div>
<svg style="left:173px;top:243px" width="14" height="9" viewBox="0 0 14 9"><ellipse cx="7" cy="4.5" rx="6.4" ry="3.8" fill="none" stroke="#222" stroke-width="1.2"/></svg>
<div class="a" style="left:192px;top:241px;width:12px;height:12px;border-radius:50%;background:radial-gradient(#3c3c3c 30%,#505050 60%,rgba(90,90,90,0) 75%)"></div>
<svg style="left:210px;top:240px" width="12" height="14" viewBox="0 0 12 14"><path d="M2 12 Q4 7 6 5 L10 1 Q11.5 2 10.5 5 L6 9 Z" fill="#eee" stroke="#222" stroke-width="0.8"/><path d="M1.5 12.5 Q6 3 10.5 12.5" stroke="#222" stroke-width="0.7" fill="none"/><rect x="0.5" y="11.5" width="2" height="2" fill="#eee"/><rect x="9.5" y="11.5" width="2" height="2" fill="#eee"/></svg>
<div class="a" style="left:133.5px;top:257.5px;width:41.5px;height:14px;background:#2c52a0;border:1.5px solid #8cc8ee;box-shadow:inset 0 0 0 1px #1e1e1e"></div>
<div class="a" style="left:177px;top:258px;width:42px;height:13px;background:#fff;border:1px solid #5a5a5a"></div>
<svg style="left:221px;top:257px" width="42" height="14.5" viewBox="0 0 42 14.5"><rect x="0.5" y="0.5" width="41" height="13.5" rx="1.5" fill="#fff" stroke="#4e4e50" stroke-width="1"/><rect x="1.0" y="4.2" width="3.50" height="3.2" fill="#8a8a8a"/><rect x="1.0" y="10.600000000000001" width="3.50" height="3.2" fill="#8a8a8a"/><rect x="4.5" y="1.0" width="3.50" height="3.2" fill="#8a8a8a"/><rect x="4.5" y="7.4" width="3.50" height="3.2" fill="#8a8a8a"/><rect x="8.0" y="4.2" width="3.50" height="3.2" fill="#8a8a8a"/><rect x="8.0" y="10.600000000000001" width="3.50" height="3.2" fill="#8a8a8a"/><rect x="11.5" y="1.0" width="3.50" height="3.2" fill="#8a8a8a"/><rect x="11.5" y="7.4" width="3.50" height="3.2" fill="#8a8a8a"/><rect x="15.0" y="4.2" width="3.50" height="3.2" fill="#8a8a8a"/><rect x="15.0" y="10.600000000000001" width="3.50" height="3.2" fill="#8a8a8a"/><rect x="18.5" y="1.0" width="3.50" height="3.2" fill="#8a8a8a"/><rect x="18.5" y="7.4" width="3.50" height="3.2" fill="#8a8a8a"/><rect x="22.0" y="4.2" width="3.50" height="3.2" fill="#8a8a8a"/><rect x="22.0" y="10.600000000000001" width="3.50" height="3.2" fill="#8a8a8a"/><rect x="25.5" y="1.0" width="3.50" height="3.2" fill="#8a8a8a"/><rect x="25.5" y="7.4" width="3.50" height="3.2" fill="#8a8a8a"/><rect x="29.0" y="4.2" width="3.50" height="3.2" fill="#8a8a8a"/><rect x="29.0" y="10.600000000000001" width="3.50" height="3.2" fill="#8a8a8a"/><rect x="32.5" y="1.0" width="3.50" height="3.2" fill="#8a8a8a"/><rect x="32.5" y="7.4" width="3.50" height="3.2" fill="#8a8a8a"/><rect x="36.0" y="4.2" width="3.50" height="3.2" fill="#8a8a8a"/><rect x="36.0" y="10.600000000000001" width="3.50" height="3.2" fill="#8a8a8a"/><rect x="39.5" y="1.0" width="1.50" height="3.2" fill="#8a8a8a"/><rect x="39.5" y="7.4" width="1.50" height="3.2" fill="#8a8a8a"/><rect x="0.5" y="0.5" width="41" height="13.5" rx="1.5" fill="none" stroke="#4e4e50" stroke-width="1"/></svg>
<div class="a" style="left:133px;top:272px;width:128px;height:4px;background:#77787c"></div>
<div class="a" style="left:133px;top:288px;width:128px;height:4px;background:#77787c"></div>
<div class="a" style="left:133.5px;top:292.5px;width:41px;height:17px;background:linear-gradient(#8ca5b7,#7390a4);border:1px solid #5a6e7e;border-radius:2px"></div>
<svg style="left:136px;top:294px" width="16" height="14" viewBox="0 0 16 14"><ellipse cx="8" cy="12" rx="4" ry="1.8" fill="#b8d4f0" opacity="0.7"/><circle cx="4.3" cy="11.5" r="2" fill="#8fc0f0"/><path d="M12.5 2 L5.5 9" stroke="#3a3a3a" stroke-width="2.6" stroke-linecap="round"/><path d="M12.5 2 L5.5 9" stroke="#d8d8d8" stroke-width="1.4" stroke-linecap="round"/><circle cx="4.3" cy="10.6" r="2.3" fill="#f4f4f4" stroke="#555" stroke-width="0.4"/></svg>
<div class="a" style="left:176px;top:292.5px;width:40.5px;height:17px;background:#6e6e71;border:1px solid #505052;border-radius:2px"></div>
<svg style="left:179px;top:294px" width="16" height="14" viewBox="0 0 16 14"><rect x="5" y="9.8" width="7" height="3" fill="#f2b484"/><circle cx="4.3" cy="11.3" r="2" fill="#f4c8b8"/><path d="M12.5 2 L5.5 9" stroke="#3a3a3a" stroke-width="2.6" stroke-linecap="round"/><path d="M12.5 2 L5.5 9" stroke="#d8d8d8" stroke-width="1.4" stroke-linecap="round"/><circle cx="4.3" cy="10.6" r="2.3" fill="#f4f4f4" stroke="#555" stroke-width="0.4"/></svg>
<div class="a" style="left:218.5px;top:292.5px;width:40.5px;height:17px;background:#6e6e71;border:1px solid #505052;border-radius:2px"></div>
<svg style="left:222px;top:294px" width="16" height="14" viewBox="0 0 16 14"><ellipse cx="6.5" cy="12" rx="3.5" ry="1.3" fill="#222" opacity="0.6"/><path d="M12.5 2 L5.5 9" stroke="#3a3a3a" stroke-width="2.6" stroke-linecap="round"/><path d="M12.5 2 L5.5 9" stroke="#d8d8d8" stroke-width="1.4" stroke-linecap="round"/><circle cx="4.3" cy="10.6" r="2.3" fill="#f4f4f4" stroke="#555" stroke-width="0.4"/></svg>
<div class="a" style="left:133px;top:311px;width:119px;height:212px;background:#77787c;border-top:1px solid #555;border-left:1px solid #58585a"></div>
<div class="a" style="left:252px;top:311px;width:8px;height:212px;background:#646467;border-left:1px solid #58585a"></div>
<div class="a" style="left:252.5px;top:321px;width:6.5px;height:172px;background:linear-gradient(90deg,#7a7a7d,#707073);border:1px solid #5e5e60;border-radius:1px"></div>
<div class="a" style="left:252.5px;top:313px;width:6.5px;height:7px;background:#7b7b7e;border:1px solid #5e5e60"></div>
<svg style="left:253.5px;top:315px" width="5" height="3" viewBox="0 0 5 3"><path d="M0 3 L2.5 0 L5 3Z" fill="#333"/></svg>
<div class="a" style="left:252.5px;top:515px;width:6.5px;height:7px;background:#7b7b7e;border:1px solid #5e5e60"></div>
<svg style="left:253.5px;top:517px" width="5" height="3" viewBox="0 0 5 3"><path d="M0 0 L2.5 3 L5 0Z" fill="#333"/></svg>
<svg style="left:254px;top:404px" width="4" height="5" viewBox="0 0 4 5"><path d="M0 0.5 H4 M0 2.5 H4 M0 4.5 H4" stroke="#555" stroke-width="0.8"/></svg>
<svg style="left:0;top:0" width="960" height="540"><defs><filter id="bl0" x="-20%" y="-80%" width="140%" height="260%"><feGaussianBlur stdDeviation="0.35"/></filter><filter id="bl1" x="-20%" y="-80%" width="140%" height="260%"><feGaussianBlur stdDeviation="0.75"/></filter><filter id="bl2" x="-20%" y="-80%" width="140%" height="260%"><feGaussianBlur stdDeviation="0.35"/></filter><filter id="bl3" x="-20%" y="-80%" width="140%" height="260%"><feGaussianBlur stdDeviation="0.75"/></filter><filter id="bl4" x="-20%" y="-80%" width="140%" height="260%"><feGaussianBlur stdDeviation="0.35"/></filter><filter id="bl5" x="-20%" y="-80%" width="140%" height="260%"><feGaussianBlur stdDeviation="0.8"/></filter><filter id="bl6" x="-20%" y="-80%" width="140%" height="260%"><feGaussianBlur stdDeviation="0.7"/></filter><filter id="bl7" x="-20%" y="-80%" width="140%" height="260%"><feGaussianBlur stdDeviation="0.85"/></filter><filter id="bl8" x="-20%" y="-80%" width="140%" height="260%"><feGaussianBlur stdDeviation="0.4"/></filter><filter id="bl9" x="-20%" y="-80%" width="140%" height="260%"><feGaussianBlur stdDeviation="0.75"/></filter><filter id="bl10" x="-20%" y="-80%" width="140%" height="260%"><feGaussianBlur stdDeviation="0.35"/></filter><filter id="bl11" x="-20%" y="-80%" width="140%" height="260%"><feGaussianBlur stdDeviation="0.7"/></filter><filter id="bl12" x="-20%" y="-80%" width="140%" height="260%"><feGaussianBlur stdDeviation="0.6"/></filter></defs></svg>
<div class="a" style="left:133.5px;top:312px;width:118px;height:17px;background:linear-gradient(#8aa3b5,#7792a6);border-bottom:1px solid #555"></div>
<svg style="left:0;top:0;clip-path:inset(312px 0 0px 0)" width="960" height="540"><path d="M145.00 323.30 L145.96 323.12 L146.91 322.87 L147.87 322.56 L148.83 322.20 L149.79 321.81 L150.74 321.37 L151.70 320.91 L152.66 320.42 L153.61 319.91 L154.57 319.39 L155.53 318.87 L156.49 318.34 L157.44 317.82 L158.40 317.31 L159.36 316.82 L160.31 316.36 L161.27 315.92 L162.23 315.52 L163.19 315.16 L164.14 314.84 L165.10 314.57 L166.06 314.35 L167.01 314.18 L167.97 314.07 L168.93 314.02 L169.89 314.02 L170.84 314.07 L171.80 314.17 L172.76 314.32 L173.71 314.50 L174.67 314.73 L175.63 314.99 L176.59 315.28 L177.54 315.60 L178.50 315.94 L179.46 316.30 L180.41 316.68 L181.37 317.07 L182.33 317.46 L183.29 317.85 L184.24 318.23 L185.20 318.60 L186.16 318.96 L187.11 319.30 L188.07 319.61 L189.03 319.89 L189.99 320.14 L190.94 320.37 L191.90 320.57 L192.86 320.73 L193.81 320.87 L194.77 320.96 L195.73 321.03 L196.69 321.06 L197.64 321.05 L198.60 321.01 L199.56 320.93 L200.51 320.83 L201.47 320.70 L202.43 320.54 L203.39 320.36 L204.34 320.16 L205.30 319.95 L206.26 319.73 L207.21 319.51 L208.17 319.29 L209.13 319.07 L210.09 318.87 L211.04 318.68 L212.00 318.55 L212.00 318.55 L211.04 319.13 L210.09 319.70 L209.13 320.27 L208.17 320.84 L207.21 321.39 L206.26 321.94 L205.30 322.46 L204.34 322.97 L203.39 323.44 L202.43 323.89 L201.47 324.29 L200.51 324.66 L199.56 324.98 L198.60 325.25 L197.64 325.47 L196.69 325.64 L195.73 325.76 L194.77 325.82 L193.81 325.83 L192.86 325.79 L191.90 325.69 L190.94 325.54 L189.99 325.34 L189.03 325.09 L188.07 324.81 L187.11 324.50 L186.16 324.16 L185.20 323.80 L184.24 323.43 L183.29 323.05 L182.33 322.66 L181.37 322.27 L180.41 321.88 L179.46 321.50 L178.50 321.14 L177.54 320.80 L176.59 320.48 L175.63 320.19 L174.67 319.93 L173.71 319.70 L172.76 319.52 L171.80 319.37 L170.84 319.27 L169.89 319.21 L168.93 319.19 L167.97 319.19 L167.01 319.23 L166.06 319.31 L165.10 319.41 L164.14 319.54 L163.19 319.70 L162.23 319.89 L161.27 320.09 L160.31 320.31 L159.36 320.55 L158.40 320.80 L157.44 321.06 L156.49 321.31 L155.53 321.57 L154.57 321.82 L153.61 322.06 L152.66 322.29 L151.70 322.50 L150.74 322.69 L149.79 322.85 L148.83 322.99 L147.87 323.10 L146.91 323.19 L145.96 323.25 L145.00 323.30Z" fill="#0e0e0e" fill-opacity="1" filter="url(#bl0)"/></svg>
<div class="a" style="left:133.5px;top:329px;width:118px;height:17px;border-bottom:1px solid #555557"></div>
<svg style="left:0;top:0;clip-path:inset(329px 0 0px 0)" width="960" height="540"><defs><linearGradient id="sg1" gradientUnits="userSpaceOnUse" x1="148" y1="0" x2="210" y2="0"><stop offset="0" stop-color="#111" stop-opacity="0.15"/><stop offset="0.4" stop-color="#111" stop-opacity="1"/><stop offset="0.7" stop-color="#111" stop-opacity="1"/><stop offset="1" stop-color="#111" stop-opacity="0.2"/></linearGradient></defs><path d="M148.00 340.30 L148.89 340.00 L149.77 339.69 L150.66 339.34 L151.54 338.96 L152.43 338.55 L153.31 338.12 L154.20 337.66 L155.09 337.18 L155.97 336.69 L156.86 336.19 L157.74 335.69 L158.63 335.18 L159.51 334.68 L160.40 334.20 L161.29 333.73 L162.17 333.28 L163.06 332.86 L163.94 332.46 L164.83 332.11 L165.71 331.79 L166.60 331.51 L167.49 331.28 L168.37 331.09 L169.26 330.96 L170.14 330.87 L171.03 330.83 L171.91 330.84 L172.80 330.91 L173.69 331.02 L174.57 331.17 L175.46 331.37 L176.34 331.61 L177.23 331.89 L178.11 332.20 L179.00 332.54 L179.89 332.90 L180.77 333.29 L181.66 333.69 L182.54 334.10 L183.43 334.51 L184.31 334.93 L185.20 335.34 L186.09 335.73 L186.97 336.11 L187.86 336.48 L188.74 336.81 L189.63 337.12 L190.51 337.40 L191.40 337.65 L192.29 337.86 L193.17 338.02 L194.06 338.15 L194.94 338.24 L195.83 338.29 L196.71 338.30 L197.60 338.27 L198.49 338.20 L199.37 338.10 L200.26 337.96 L201.14 337.80 L202.03 337.61 L202.91 337.39 L203.80 337.17 L204.69 336.92 L205.57 336.68 L206.46 336.43 L207.34 336.18 L208.23 335.94 L209.11 335.72 L210.00 335.55 L210.00 335.55 L209.11 336.09 L208.23 336.63 L207.34 337.16 L206.46 337.70 L205.57 338.23 L204.69 338.75 L203.80 339.25 L202.91 339.74 L202.03 340.20 L201.14 340.63 L200.26 341.03 L199.37 341.39 L198.49 341.71 L197.60 341.99 L196.71 342.22 L195.83 342.41 L194.94 342.55 L194.06 342.63 L193.17 342.67 L192.29 342.66 L191.40 342.61 L190.51 342.50 L189.63 342.35 L188.74 342.17 L187.86 341.94 L186.97 341.68 L186.09 341.39 L185.20 341.07 L184.31 340.73 L183.43 340.38 L182.54 340.01 L181.66 339.64 L180.77 339.27 L179.89 338.90 L179.00 338.54 L178.11 338.19 L177.23 337.87 L176.34 337.56 L175.46 337.28 L174.57 337.04 L173.69 336.82 L172.80 336.64 L171.91 336.50 L171.03 336.40 L170.14 336.33 L169.26 336.31 L168.37 336.32 L167.49 336.38 L166.60 336.47 L165.71 336.60 L164.83 336.76 L163.94 336.94 L163.06 337.16 L162.17 337.39 L161.29 337.65 L160.40 337.92 L159.51 338.19 L158.63 338.47 L157.74 338.75 L156.86 339.02 L155.97 339.28 L155.09 339.52 L154.20 339.75 L153.31 339.94 L152.43 340.10 L151.54 340.23 L150.66 340.32 L149.77 340.37 L148.89 340.37 L148.00 340.30Z" fill="url(#sg1)" filter="url(#bl1)"/></svg>
<div class="a" style="left:133.5px;top:346px;width:118px;height:16px;border-bottom:1px solid #555557"></div>
<svg style="left:0;top:0;clip-path:inset(346px 0 0px 0)" width="960" height="540"><path d="M145.00 357.30 L145.96 357.12 L146.91 356.87 L147.87 356.57 L148.83 356.22 L149.79 355.83 L150.74 355.40 L151.70 354.94 L152.66 354.46 L153.61 353.95 L154.57 353.44 L155.53 352.92 L156.49 352.40 L157.44 351.88 L158.40 351.38 L159.36 350.89 L160.31 350.43 L161.27 350.00 L162.23 349.61 L163.19 349.25 L164.14 348.93 L165.10 348.67 L166.06 348.45 L167.01 348.28 L167.97 348.17 L168.93 348.12 L169.89 348.12 L170.84 348.17 L171.80 348.27 L172.76 348.42 L173.71 348.60 L174.67 348.83 L175.63 349.09 L176.59 349.38 L177.54 349.70 L178.50 350.04 L179.46 350.40 L180.41 350.78 L181.37 351.17 L182.33 351.56 L183.29 351.95 L184.24 352.33 L185.20 352.70 L186.16 353.06 L187.11 353.40 L188.07 353.71 L189.03 353.99 L189.99 354.24 L190.94 354.47 L191.90 354.67 L192.86 354.83 L193.81 354.96 L194.77 355.06 L195.73 355.12 L196.69 355.14 L197.64 355.13 L198.60 355.09 L199.56 355.01 L200.51 354.90 L201.47 354.77 L202.43 354.60 L203.39 354.42 L204.34 354.22 L205.30 354.00 L206.26 353.77 L207.21 353.54 L208.17 353.32 L209.13 353.09 L210.09 352.88 L211.04 352.69 L212.00 352.55 L212.00 352.55 L211.04 353.12 L210.09 353.69 L209.13 354.25 L208.17 354.81 L207.21 355.36 L206.26 355.90 L205.30 356.42 L204.34 356.91 L203.39 357.38 L202.43 357.82 L201.47 358.22 L200.51 358.58 L199.56 358.90 L198.60 359.17 L197.64 359.39 L196.69 359.56 L195.73 359.67 L194.77 359.73 L193.81 359.74 L192.86 359.69 L191.90 359.59 L190.94 359.44 L189.99 359.24 L189.03 358.99 L188.07 358.71 L187.11 358.40 L186.16 358.06 L185.20 357.70 L184.24 357.33 L183.29 356.95 L182.33 356.56 L181.37 356.17 L180.41 355.78 L179.46 355.40 L178.50 355.04 L177.54 354.70 L176.59 354.38 L175.63 354.09 L174.67 353.83 L173.71 353.60 L172.76 353.42 L171.80 353.27 L170.84 353.17 L169.89 353.11 L168.93 353.09 L167.97 353.09 L167.01 353.14 L166.06 353.21 L165.10 353.32 L164.14 353.45 L163.19 353.61 L162.23 353.80 L161.27 354.01 L160.31 354.24 L159.36 354.48 L158.40 354.73 L157.44 354.99 L156.49 355.26 L155.53 355.52 L154.57 355.77 L153.61 356.02 L152.66 356.25 L151.70 356.47 L150.74 356.66 L149.79 356.83 L148.83 356.98 L147.87 357.09 L146.91 357.18 L145.96 357.25 L145.00 357.30Z" fill="#0e0e0e" fill-opacity="1" filter="url(#bl2)"/></svg>
<div class="a" style="left:133.5px;top:362px;width:118px;height:17px;border-bottom:1px solid #555557"></div>
<svg style="left:0;top:0;clip-path:inset(362px 0 0px 0)" width="960" height="540"><defs><linearGradient id="sg3" gradientUnits="userSpaceOnUse" x1="147" y1="0" x2="207" y2="0"><stop offset="0" stop-color="#111" stop-opacity="0.15"/><stop offset="0.4" stop-color="#111" stop-opacity="1"/><stop offset="0.7" stop-color="#111" stop-opacity="1"/><stop offset="1" stop-color="#111" stop-opacity="0.2"/></linearGradient></defs><path d="M147.00 373.30 L147.86 373.02 L148.71 372.71 L149.57 372.37 L150.43 372.00 L151.29 371.60 L152.14 371.18 L153.00 370.73 L153.86 370.26 L154.71 369.78 L155.57 369.29 L156.43 368.79 L157.29 368.29 L158.14 367.80 L159.00 367.32 L159.86 366.86 L160.71 366.42 L161.57 366.00 L162.43 365.61 L163.29 365.26 L164.14 364.95 L165.00 364.68 L165.86 364.45 L166.71 364.27 L167.57 364.14 L168.43 364.05 L169.29 364.02 L170.14 364.03 L171.00 364.10 L171.86 364.21 L172.71 364.37 L173.57 364.57 L174.43 364.81 L175.29 365.09 L176.14 365.40 L177.00 365.74 L177.86 366.10 L178.71 366.49 L179.57 366.89 L180.43 367.30 L181.29 367.71 L182.14 368.12 L183.00 368.53 L183.86 368.92 L184.71 369.30 L185.57 369.66 L186.43 369.99 L187.29 370.30 L188.14 370.57 L189.00 370.81 L189.86 371.02 L190.71 371.18 L191.57 371.30 L192.43 371.39 L193.29 371.43 L194.14 371.43 L195.00 371.39 L195.86 371.32 L196.71 371.21 L197.57 371.06 L198.43 370.89 L199.29 370.69 L200.14 370.47 L201.00 370.24 L201.86 369.99 L202.71 369.73 L203.57 369.47 L204.43 369.21 L205.29 368.97 L206.14 368.74 L207.00 368.55 L207.00 368.55 L206.14 369.08 L205.29 369.60 L204.43 370.13 L203.57 370.66 L202.71 371.18 L201.86 371.69 L201.00 372.18 L200.14 372.66 L199.29 373.11 L198.43 373.53 L197.57 373.92 L196.71 374.28 L195.86 374.59 L195.00 374.86 L194.14 375.09 L193.29 375.27 L192.43 375.40 L191.57 375.48 L190.71 375.52 L189.86 375.50 L189.00 375.44 L188.14 375.33 L187.29 375.18 L186.43 374.99 L185.57 374.76 L184.71 374.49 L183.86 374.20 L183.00 373.88 L182.14 373.54 L181.29 373.18 L180.43 372.82 L179.57 372.44 L178.71 372.07 L177.86 371.70 L177.00 371.34 L176.14 370.99 L175.29 370.67 L174.43 370.36 L173.57 370.09 L172.71 369.84 L171.86 369.63 L171.00 369.45 L170.14 369.31 L169.29 369.21 L168.43 369.15 L167.57 369.13 L166.71 369.15 L165.86 369.21 L165.00 369.30 L164.14 369.44 L163.29 369.60 L162.43 369.79 L161.57 370.01 L160.71 370.26 L159.86 370.52 L159.00 370.79 L158.14 371.08 L157.29 371.36 L156.43 371.65 L155.57 371.93 L154.71 372.19 L153.86 372.45 L153.00 372.68 L152.14 372.88 L151.29 373.05 L150.43 373.19 L149.57 373.29 L148.71 373.35 L147.86 373.36 L147.00 373.30Z" fill="url(#sg3)" filter="url(#bl3)"/></svg>
<div class="a" style="left:133.5px;top:379px;width:118px;height:17px;border-bottom:1px solid #555557"></div>
<svg style="left:0;top:0;clip-path:inset(379px 0 0px 0)" width="960" height="540"><path d="M145.00 390.30 L145.96 390.12 L146.91 389.87 L147.87 389.57 L148.83 389.22 L149.79 388.83 L150.74 388.40 L151.70 387.94 L152.66 387.46 L153.61 386.95 L154.57 386.44 L155.53 385.92 L156.49 385.40 L157.44 384.88 L158.40 384.38 L159.36 383.89 L160.31 383.43 L161.27 383.00 L162.23 382.61 L163.19 382.25 L164.14 381.93 L165.10 381.67 L166.06 381.45 L167.01 381.28 L167.97 381.17 L168.93 381.12 L169.89 381.12 L170.84 381.17 L171.80 381.27 L172.76 381.42 L173.71 381.60 L174.67 381.83 L175.63 382.09 L176.59 382.38 L177.54 382.70 L178.50 383.04 L179.46 383.40 L180.41 383.78 L181.37 384.17 L182.33 384.56 L183.29 384.95 L184.24 385.33 L185.20 385.70 L186.16 386.06 L187.11 386.40 L188.07 386.71 L189.03 386.99 L189.99 387.24 L190.94 387.47 L191.90 387.67 L192.86 387.83 L193.81 387.96 L194.77 388.06 L195.73 388.12 L196.69 388.14 L197.64 388.13 L198.60 388.09 L199.56 388.01 L200.51 387.90 L201.47 387.77 L202.43 387.60 L203.39 387.42 L204.34 387.22 L205.30 387.00 L206.26 386.77 L207.21 386.54 L208.17 386.32 L209.13 386.09 L210.09 385.88 L211.04 385.69 L212.00 385.55 L212.00 385.55 L211.04 386.12 L210.09 386.69 L209.13 387.25 L208.17 387.81 L207.21 388.36 L206.26 388.90 L205.30 389.42 L204.34 389.91 L203.39 390.38 L202.43 390.82 L201.47 391.22 L200.51 391.58 L199.56 391.90 L198.60 392.17 L197.64 392.39 L196.69 392.56 L195.73 392.67 L194.77 392.73 L193.81 392.74 L192.86 392.69 L191.90 392.59 L190.94 392.44 L189.99 392.24 L189.03 391.99 L188.07 391.71 L187.11 391.40 L186.16 391.06 L185.20 390.70 L184.24 390.33 L183.29 389.95 L182.33 389.56 L181.37 389.17 L180.41 388.78 L179.46 388.40 L178.50 388.04 L177.54 387.70 L176.59 387.38 L175.63 387.09 L174.67 386.83 L173.71 386.60 L172.76 386.42 L171.80 386.27 L170.84 386.17 L169.89 386.11 L168.93 386.09 L167.97 386.09 L167.01 386.14 L166.06 386.21 L165.10 386.32 L164.14 386.45 L163.19 386.61 L162.23 386.80 L161.27 387.01 L160.31 387.24 L159.36 387.48 L158.40 387.73 L157.44 387.99 L156.49 388.26 L155.53 388.52 L154.57 388.77 L153.61 389.02 L152.66 389.25 L151.70 389.47 L150.74 389.66 L149.79 389.83 L148.83 389.98 L147.87 390.09 L146.91 390.18 L145.96 390.25 L145.00 390.30Z" fill="#0e0e0e" fill-opacity="1" filter="url(#bl4)"/></svg>
<div class="a" style="left:133.5px;top:396px;width:118px;height:17px;border-bottom:1px solid #555557"></div>
<svg style="left:0;top:0;clip-path:inset(396px 0 0px 0)" width="960" height="540"><defs><linearGradient id="sg5" gradientUnits="userSpaceOnUse" x1="144" y1="0" x2="214" y2="0"><stop offset="0" stop-color="#111" stop-opacity="0.15"/><stop offset="0.4" stop-color="#111" stop-opacity="1"/><stop offset="0.7" stop-color="#111" stop-opacity="1"/><stop offset="1" stop-color="#111" stop-opacity="0.2"/></linearGradient></defs><path d="M144.00 407.30 L145.00 407.02 L146.00 406.71 L147.00 406.37 L148.00 406.00 L149.00 405.60 L150.00 405.18 L151.00 404.73 L152.00 404.26 L153.00 403.78 L154.00 403.29 L155.00 402.79 L156.00 402.29 L157.00 401.80 L158.00 401.32 L159.00 400.86 L160.00 400.42 L161.00 400.00 L162.00 399.61 L163.00 399.26 L164.00 398.95 L165.00 398.68 L166.00 398.45 L167.00 398.27 L168.00 398.14 L169.00 398.05 L170.00 398.02 L171.00 398.03 L172.00 398.10 L173.00 398.21 L174.00 398.37 L175.00 398.57 L176.00 398.81 L177.00 399.09 L178.00 399.40 L179.00 399.74 L180.00 400.10 L181.00 400.49 L182.00 400.89 L183.00 401.30 L184.00 401.71 L185.00 402.12 L186.00 402.53 L187.00 402.92 L188.00 403.30 L189.00 403.66 L190.00 403.99 L191.00 404.30 L192.00 404.57 L193.00 404.81 L194.00 405.02 L195.00 405.18 L196.00 405.30 L197.00 405.39 L198.00 405.43 L199.00 405.43 L200.00 405.39 L201.00 405.32 L202.00 405.21 L203.00 405.06 L204.00 404.89 L205.00 404.69 L206.00 404.47 L207.00 404.24 L208.00 403.99 L209.00 403.73 L210.00 403.47 L211.00 403.21 L212.00 402.97 L213.00 402.74 L214.00 402.55 L214.00 402.55 L213.00 403.08 L212.00 403.60 L211.00 404.13 L210.00 404.66 L209.00 405.18 L208.00 405.69 L207.00 406.18 L206.00 406.66 L205.00 407.11 L204.00 407.53 L203.00 407.92 L202.00 408.28 L201.00 408.59 L200.00 408.86 L199.00 409.09 L198.00 409.27 L197.00 409.40 L196.00 409.48 L195.00 409.52 L194.00 409.50 L193.00 409.44 L192.00 409.33 L191.00 409.18 L190.00 408.99 L189.00 408.76 L188.00 408.49 L187.00 408.20 L186.00 407.88 L185.00 407.54 L184.00 407.18 L183.00 406.82 L182.00 406.44 L181.00 406.07 L180.00 405.70 L179.00 405.34 L178.00 404.99 L177.00 404.67 L176.00 404.36 L175.00 404.09 L174.00 403.84 L173.00 403.63 L172.00 403.45 L171.00 403.31 L170.00 403.21 L169.00 403.15 L168.00 403.13 L167.00 403.15 L166.00 403.21 L165.00 403.30 L164.00 403.44 L163.00 403.60 L162.00 403.79 L161.00 404.01 L160.00 404.26 L159.00 404.52 L158.00 404.79 L157.00 405.08 L156.00 405.36 L155.00 405.65 L154.00 405.93 L153.00 406.19 L152.00 406.45 L151.00 406.68 L150.00 406.88 L149.00 407.05 L148.00 407.19 L147.00 407.29 L146.00 407.35 L145.00 407.36 L144.00 407.30Z" fill="url(#sg5)" filter="url(#bl5)"/></svg>
<div class="a" style="left:133.5px;top:413px;width:118px;height:17px;border-bottom:1px solid #555557"></div>
<svg style="left:0;top:0;clip-path:inset(413px 0 0px 0)" width="960" height="540"><defs><linearGradient id="sg6" gradientUnits="userSpaceOnUse" x1="153" y1="0" x2="206" y2="0"><stop offset="0" stop-color="#111" stop-opacity="0.15"/><stop offset="0.4" stop-color="#111" stop-opacity="1"/><stop offset="0.7" stop-color="#111" stop-opacity="1"/><stop offset="1" stop-color="#111" stop-opacity="0.2"/></linearGradient></defs><path d="M153.00 424.30 L153.76 424.02 L154.51 423.71 L155.27 423.37 L156.03 423.00 L156.79 422.60 L157.54 422.18 L158.30 421.73 L159.06 421.26 L159.81 420.78 L160.57 420.29 L161.33 419.79 L162.09 419.29 L162.84 418.80 L163.60 418.32 L164.36 417.86 L165.11 417.42 L165.87 417.00 L166.63 416.61 L167.39 416.26 L168.14 415.95 L168.90 415.68 L169.66 415.45 L170.41 415.27 L171.17 415.14 L171.93 415.05 L172.69 415.02 L173.44 415.03 L174.20 415.10 L174.96 415.21 L175.71 415.37 L176.47 415.57 L177.23 415.81 L177.99 416.09 L178.74 416.40 L179.50 416.74 L180.26 417.10 L181.01 417.49 L181.77 417.89 L182.53 418.30 L183.29 418.71 L184.04 419.12 L184.80 419.53 L185.56 419.92 L186.31 420.30 L187.07 420.66 L187.83 420.99 L188.59 421.30 L189.34 421.57 L190.10 421.81 L190.86 422.02 L191.61 422.18 L192.37 422.30 L193.13 422.39 L193.89 422.43 L194.64 422.43 L195.40 422.39 L196.16 422.32 L196.91 422.21 L197.67 422.06 L198.43 421.89 L199.19 421.69 L199.94 421.47 L200.70 421.24 L201.46 420.99 L202.21 420.73 L202.97 420.47 L203.73 420.21 L204.49 419.97 L205.24 419.74 L206.00 419.55 L206.00 419.55 L205.24 420.08 L204.49 420.60 L203.73 421.13 L202.97 421.66 L202.21 422.18 L201.46 422.69 L200.70 423.18 L199.94 423.66 L199.19 424.11 L198.43 424.53 L197.67 424.92 L196.91 425.28 L196.16 425.59 L195.40 425.86 L194.64 426.09 L193.89 426.27 L193.13 426.40 L192.37 426.48 L191.61 426.52 L190.86 426.50 L190.10 426.44 L189.34 426.33 L188.59 426.18 L187.83 425.99 L187.07 425.76 L186.31 425.49 L185.56 425.20 L184.80 424.88 L184.04 424.54 L183.29 424.18 L182.53 423.82 L181.77 423.44 L181.01 423.07 L180.26 422.70 L179.50 422.34 L178.74 421.99 L177.99 421.67 L177.23 421.36 L176.47 421.09 L175.71 420.84 L174.96 420.63 L174.20 420.45 L173.44 420.31 L172.69 420.21 L171.93 420.15 L171.17 420.13 L170.41 420.15 L169.66 420.21 L168.90 420.30 L168.14 420.44 L167.39 420.60 L166.63 420.79 L165.87 421.01 L165.11 421.26 L164.36 421.52 L163.60 421.79 L162.84 422.08 L162.09 422.36 L161.33 422.65 L160.57 422.93 L159.81 423.19 L159.06 423.45 L158.30 423.68 L157.54 423.88 L156.79 424.05 L156.03 424.19 L155.27 424.29 L154.51 424.35 L153.76 424.36 L153.00 424.30Z" fill="url(#sg6)" filter="url(#bl6)"/></svg>
<div class="a" style="left:133.5px;top:430px;width:118px;height:16px;border-bottom:1px solid #555557"></div>
<svg style="left:0;top:0;clip-path:inset(430px 0 0px 0)" width="960" height="540"><path d="M142.00 441.30 L143.04 439.45 L144.09 438.58 L145.13 437.93 L146.17 437.70 L147.21 437.43 L148.26 437.13 L149.30 436.80 L150.34 436.45 L151.39 436.09 L152.43 435.71 L153.47 435.32 L154.51 434.93 L155.56 434.54 L156.60 434.16 L157.64 433.79 L158.69 433.44 L159.73 433.11 L160.77 432.80 L161.81 432.53 L162.86 432.29 L163.90 432.09 L164.94 431.93 L165.99 431.81 L167.03 431.73 L168.07 431.70 L169.11 431.71 L170.16 431.77 L171.20 431.87 L172.24 432.02 L173.29 432.20 L174.33 432.43 L175.37 432.69 L176.41 432.98 L177.46 433.30 L178.50 433.64 L179.54 434.00 L180.59 434.38 L181.63 434.77 L182.67 435.16 L183.71 435.55 L184.76 435.93 L185.80 436.30 L186.84 436.66 L187.89 437.00 L188.93 437.31 L189.97 437.59 L191.01 437.84 L192.06 438.05 L193.10 438.23 L194.14 438.36 L195.19 438.45 L196.23 438.49 L197.27 438.49 L198.31 438.45 L199.36 438.36 L200.40 438.23 L201.44 438.06 L202.49 437.84 L203.53 437.59 L204.57 437.31 L205.61 437.00 L206.66 436.67 L207.70 436.31 L208.74 435.94 L209.79 435.55 L210.83 435.16 L211.87 434.77 L212.91 434.83 L213.96 435.17 L215.00 436.55 L215.00 436.55 L213.96 438.64 L212.91 439.74 L211.87 440.57 L210.83 440.96 L209.79 441.35 L208.74 441.74 L207.70 442.11 L206.66 442.47 L205.61 442.80 L204.57 443.11 L203.53 443.39 L202.49 443.64 L201.44 443.86 L200.40 444.03 L199.36 444.16 L198.31 444.25 L197.27 444.29 L196.23 444.29 L195.19 444.25 L194.14 444.16 L193.10 444.03 L192.06 443.85 L191.01 443.64 L189.97 443.39 L188.93 443.11 L187.89 442.80 L186.84 442.46 L185.80 442.10 L184.76 441.73 L183.71 441.35 L182.67 440.96 L181.63 440.57 L180.59 440.18 L179.54 439.80 L178.50 439.44 L177.46 439.10 L176.41 438.78 L175.37 438.49 L174.33 438.23 L173.29 438.00 L172.24 437.82 L171.20 437.67 L170.16 437.57 L169.11 437.51 L168.07 437.50 L167.03 437.53 L165.99 437.61 L164.94 437.73 L163.90 437.89 L162.86 438.09 L161.81 438.33 L160.77 438.60 L159.73 438.91 L158.69 439.24 L157.64 439.59 L156.60 439.96 L155.56 440.34 L154.51 440.73 L153.47 441.12 L152.43 441.51 L151.39 441.89 L150.34 442.25 L149.30 442.60 L148.26 442.93 L147.21 443.23 L146.17 443.50 L145.13 443.73 L144.09 443.48 L143.04 442.92 L142.00 441.30Z" fill="#0e0e0e" fill-opacity="0.92" filter="url(#bl7)"/></svg>
<div class="a" style="left:133.5px;top:446px;width:118px;height:17px;border-bottom:1px solid #555557"></div>
<svg style="left:0;top:0;clip-path:inset(446px 0 0px 0)" width="960" height="540"><path d="M143.00 456.30 L144.03 456.14 L145.06 455.95 L146.09 455.72 L147.11 455.45 L148.14 455.15 L149.17 454.82 L150.20 454.46 L151.23 454.08 L152.26 453.68 L153.29 453.28 L154.31 452.86 L155.34 452.44 L156.37 452.03 L157.40 451.62 L158.43 451.23 L159.46 450.86 L160.49 450.51 L161.51 450.18 L162.54 449.89 L163.57 449.63 L164.60 449.41 L165.63 449.23 L166.66 449.10 L167.69 449.01 L168.71 448.96 L169.74 448.97 L170.77 449.01 L171.80 449.10 L172.83 449.24 L173.86 449.42 L174.89 449.64 L175.91 449.89 L176.94 450.18 L177.97 450.50 L179.00 450.84 L180.03 451.20 L181.06 451.58 L182.09 451.97 L183.11 452.37 L184.14 452.76 L185.17 453.15 L186.20 453.53 L187.23 453.90 L188.26 454.25 L189.29 454.57 L190.31 454.87 L191.34 455.13 L192.37 455.36 L193.40 455.55 L194.43 455.70 L195.46 455.81 L196.49 455.87 L197.51 455.89 L198.54 455.87 L199.57 455.80 L200.60 455.70 L201.63 455.55 L202.66 455.36 L203.69 455.14 L204.71 454.88 L205.74 454.60 L206.77 454.29 L207.80 453.97 L208.83 453.62 L209.86 453.27 L210.89 452.91 L211.91 452.56 L212.94 452.20 L213.97 451.86 L215.00 451.55 L215.00 451.55 L213.97 451.95 L212.94 452.36 L211.91 452.79 L210.89 453.21 L209.86 453.63 L208.83 454.05 L207.80 454.45 L206.77 454.84 L205.74 455.20 L204.71 455.54 L203.69 455.85 L202.66 456.13 L201.63 456.36 L200.60 456.56 L199.57 456.72 L198.54 456.83 L197.51 456.90 L196.49 456.92 L195.46 456.89 L194.43 456.82 L193.40 456.71 L192.37 456.55 L191.34 456.35 L190.31 456.11 L189.29 455.85 L188.26 455.55 L187.23 455.22 L186.20 454.87 L185.17 454.51 L184.14 454.13 L183.11 453.75 L182.09 453.36 L181.06 452.98 L180.03 452.60 L179.00 452.24 L177.97 451.90 L176.94 451.58 L175.91 451.28 L174.89 451.02 L173.86 450.79 L172.83 450.60 L171.80 450.44 L170.77 450.33 L169.74 450.26 L168.71 450.24 L167.69 450.26 L166.66 450.32 L165.63 450.42 L164.60 450.57 L163.57 450.75 L162.54 450.97 L161.51 451.23 L160.49 451.51 L159.46 451.82 L158.43 452.15 L157.40 452.49 L156.37 452.85 L155.34 453.21 L154.31 453.58 L153.29 453.94 L152.26 454.29 L151.23 454.63 L150.20 454.95 L149.17 455.24 L148.14 455.51 L147.11 455.75 L146.09 455.95 L145.06 456.11 L144.03 456.23 L143.00 456.30Z" fill="#1a1a1a" filter="url(#bl8)"/><path d="M146.00 458.20 L146.96 458.04 L147.91 457.85 L148.87 457.62 L149.83 457.35 L150.79 457.05 L151.74 456.72 L152.70 456.36 L153.66 455.98 L154.61 455.58 L155.57 455.18 L156.53 454.76 L157.49 454.34 L158.44 453.93 L159.40 453.52 L160.36 453.13 L161.31 452.76 L162.27 452.41 L163.23 452.08 L164.19 451.79 L165.14 451.53 L166.10 451.31 L167.06 451.13 L168.01 451.00 L168.97 450.91 L169.93 450.86 L170.89 450.87 L171.84 450.91 L172.80 451.00 L173.76 451.14 L174.71 451.32 L175.67 451.54 L176.63 451.79 L177.59 452.08 L178.54 452.40 L179.50 452.74 L180.46 453.10 L181.41 453.48 L182.37 453.87 L183.33 454.27 L184.29 454.66 L185.24 455.05 L186.20 455.43 L187.16 455.80 L188.11 456.15 L189.07 456.47 L190.03 456.77 L190.99 457.03 L191.94 457.26 L192.90 457.45 L193.86 457.60 L194.81 457.71 L195.77 457.77 L196.73 457.79 L197.69 457.77 L198.64 457.70 L199.60 457.60 L200.56 457.45 L201.51 457.26 L202.47 457.04 L203.43 456.78 L204.39 456.50 L205.34 456.19 L206.30 455.87 L207.26 455.52 L208.21 455.17 L209.17 454.81 L210.13 454.46 L211.09 454.10 L212.04 453.76 L213.00 453.45 L213.00 453.45 L212.04 453.85 L211.09 454.26 L210.13 454.69 L209.17 455.11 L208.21 455.53 L207.26 455.95 L206.30 456.35 L205.34 456.74 L204.39 457.10 L203.43 457.44 L202.47 457.75 L201.51 458.03 L200.56 458.26 L199.60 458.46 L198.64 458.62 L197.69 458.73 L196.73 458.80 L195.77 458.82 L194.81 458.79 L193.86 458.72 L192.90 458.61 L191.94 458.45 L190.99 458.25 L190.03 458.01 L189.07 457.75 L188.11 457.45 L187.16 457.12 L186.20 456.77 L185.24 456.41 L184.29 456.03 L183.33 455.65 L182.37 455.26 L181.41 454.88 L180.46 454.50 L179.50 454.14 L178.54 453.80 L177.59 453.48 L176.63 453.18 L175.67 452.92 L174.71 452.69 L173.76 452.50 L172.80 452.34 L171.84 452.23 L170.89 452.16 L169.93 452.14 L168.97 452.16 L168.01 452.22 L167.06 452.32 L166.10 452.47 L165.14 452.65 L164.19 452.87 L163.23 453.13 L162.27 453.41 L161.31 453.72 L160.36 454.05 L159.40 454.39 L158.44 454.75 L157.49 455.11 L156.53 455.48 L155.57 455.84 L154.61 456.19 L153.66 456.53 L152.70 456.85 L151.74 457.14 L150.79 457.41 L149.83 457.65 L148.87 457.85 L147.91 458.01 L146.96 458.13 L146.00 458.20Z" fill="#222" filter="url(#bl8)"/><path d="M145.00 457.40 L145.96 457.15 L146.91 456.88 L147.87 456.57 L148.83 456.23 L149.79 455.86 L150.74 455.46 L151.70 455.04 L152.66 454.60 L153.61 454.14 L154.57 453.67 L155.53 453.19 L156.49 452.72 L157.44 452.25 L158.40 451.79 L159.36 451.35 L160.31 450.93 L161.27 450.53 L162.23 450.16 L163.19 449.83 L164.14 449.53 L165.10 449.27 L166.06 449.06 L167.01 448.89 L167.97 448.77 L168.93 448.70 L169.89 448.67 L170.84 448.70 L171.80 448.77 L172.76 448.89 L173.71 449.05 L174.67 449.26 L175.63 449.50 L176.59 449.79 L177.54 450.10 L178.50 450.44 L179.46 450.80 L180.41 451.19 L181.37 451.58 L182.33 451.99 L183.29 452.40 L184.24 452.80 L185.20 453.20 L186.16 453.59 L187.11 453.96 L188.07 454.31 L189.03 454.63 L189.99 454.92 L190.94 455.18 L191.90 455.41 L192.86 455.60 L193.81 455.74 L194.77 455.85 L195.73 455.92 L196.69 455.94 L197.64 455.92 L198.60 455.87 L199.56 455.77 L200.51 455.64 L201.47 455.47 L202.43 455.27 L203.39 455.05 L204.34 454.81 L205.30 454.54 L206.26 454.27 L207.21 453.98 L208.17 453.69 L209.13 453.41 L210.09 453.13 L211.04 452.87 L212.00 452.65 L212.00 452.65 L211.04 453.14 L210.09 453.64 L209.13 454.13 L208.17 454.63 L207.21 455.12 L206.26 455.60 L205.30 456.07 L204.34 456.52 L203.39 456.95 L202.43 457.35 L201.47 457.72 L200.51 458.05 L199.56 458.34 L198.60 458.59 L197.64 458.80 L196.69 458.96 L195.73 459.07 L194.77 459.14 L193.81 459.15 L192.86 459.12 L191.90 459.04 L190.94 458.92 L189.99 458.76 L189.03 458.55 L188.07 458.31 L187.11 458.04 L186.16 457.73 L185.20 457.41 L184.24 457.06 L183.29 456.70 L182.33 456.32 L181.37 455.95 L180.41 455.57 L179.46 455.20 L178.50 454.84 L177.54 454.49 L176.59 454.17 L175.63 453.87 L174.67 453.60 L173.71 453.35 L172.76 453.15 L171.80 452.98 L170.84 452.85 L169.89 452.75 L168.93 452.70 L167.97 452.69 L167.01 452.73 L166.06 452.80 L165.10 452.91 L164.14 453.06 L163.19 453.24 L162.23 453.45 L161.27 453.68 L160.31 453.95 L159.36 454.23 L158.40 454.52 L157.44 454.82 L156.49 455.13 L155.53 455.44 L154.57 455.74 L153.61 456.04 L152.66 456.31 L151.70 456.57 L150.74 456.80 L149.79 457.00 L148.83 457.16 L147.87 457.29 L146.91 457.38 L145.96 457.42 L145.00 457.40Z" fill="#2a2a2a" fill-opacity="0.55" filter="url(#bl8)"/></svg>
<div class="a" style="left:133.5px;top:463px;width:118px;height:17px;border-bottom:1px solid #555557"></div>
<svg style="left:0;top:0;clip-path:inset(463px 0 0px 0)" width="960" height="540"><path d="M145.00 474.26 L145.96 473.56 L146.91 473.06 L147.87 473.74 L148.83 472.90 L149.79 471.83 L150.74 472.13 L151.70 471.64 L152.66 470.52 L153.61 470.28 L154.57 469.81 L155.53 469.08 L156.49 468.35 L157.44 468.65 L158.40 467.96 L159.36 467.41 L160.31 467.07 L161.27 466.65 L162.23 467.16 L163.19 466.29 L164.14 465.62 L165.10 466.48 L166.06 465.95 L167.01 465.80 L167.97 465.28 L168.93 465.10 L169.89 465.04 L170.84 465.67 L171.80 465.68 L172.76 466.09 L173.71 466.20 L174.67 466.46 L175.63 466.05 L176.59 467.01 L177.54 466.92 L178.50 468.14 L179.46 468.15 L180.41 467.96 L181.37 468.12 L182.33 469.26 L183.29 469.78 L184.24 469.65 L185.20 470.30 L186.16 470.44 L187.11 470.99 L188.07 471.57 L189.03 471.41 L189.99 471.67 L190.94 471.46 L191.90 471.65 L192.86 471.69 L193.81 472.72 L194.77 472.65 L195.73 472.68 L196.69 472.03 L197.64 472.14 L198.60 472.56 L199.56 472.30 L200.51 472.44 L201.47 471.38 L202.43 471.39 L203.39 472.20 L204.34 470.84 L205.30 470.86 L206.26 471.11 L207.21 470.56 L208.17 470.56 L209.13 469.75 L210.09 470.23 L211.04 469.71 L212.00 469.86 L212.00 469.40 L211.04 470.30 L210.09 470.05 L209.13 471.17 L208.17 471.20 L207.21 471.73 L206.26 473.25 L205.30 473.08 L204.34 473.18 L203.39 474.32 L202.43 475.18 L201.47 475.64 L200.51 475.17 L199.56 475.42 L198.60 475.97 L197.64 476.11 L196.69 476.91 L195.73 476.30 L194.77 476.09 L193.81 476.35 L192.86 476.60 L191.90 476.47 L190.94 476.11 L189.99 475.53 L189.03 475.15 L188.07 475.00 L187.11 474.32 L186.16 475.14 L185.20 474.14 L184.24 474.27 L183.29 472.95 L182.33 473.16 L181.37 472.50 L180.41 472.41 L179.46 472.44 L178.50 471.09 L177.54 471.79 L176.59 470.46 L175.63 470.65 L174.67 470.88 L173.71 469.71 L172.76 469.43 L171.80 469.65 L170.84 470.18 L169.89 469.12 L168.93 469.65 L167.97 469.04 L167.01 470.18 L166.06 469.37 L165.10 469.53 L164.14 470.10 L163.19 470.42 L162.23 470.17 L161.27 471.47 L160.31 471.71 L159.36 471.34 L158.40 471.56 L157.44 472.71 L156.49 472.58 L155.53 473.51 L154.57 473.84 L153.61 474.21 L152.66 473.41 L151.70 473.62 L150.74 474.11 L149.79 474.14 L148.83 474.50 L147.87 473.90 L146.91 474.41 L145.96 474.82 L145.00 474.15Z" fill="#0e0e0e" fill-opacity="0.85" filter="url(#bl9)"/></svg>
<div class="a" style="left:133.5px;top:480px;width:118px;height:17px;border-bottom:1px solid #555557"></div>
<svg style="left:0;top:0;clip-path:inset(480px 0 0px 0)" width="960" height="540"><path d="M145.00 491.16 L145.96 491.05 L146.91 490.33 L147.87 490.13 L148.83 489.90 L149.79 489.63 L150.74 489.33 L151.70 489.00 L152.66 488.65 L153.61 488.28 L154.57 487.90 L155.53 487.51 L156.49 487.11 L157.44 486.71 L158.40 486.32 L159.36 485.93 L160.31 485.56 L161.27 485.20 L162.23 484.86 L163.19 484.54 L164.14 484.25 L165.10 483.97 L166.06 483.73 L167.01 483.51 L167.97 483.32 L168.93 483.16 L169.89 483.03 L170.84 482.93 L171.80 482.88 L172.76 482.86 L173.71 482.89 L174.67 482.96 L175.63 483.09 L176.59 483.26 L177.54 483.49 L178.50 483.77 L179.46 484.10 L180.41 484.48 L181.37 484.91 L182.33 485.37 L183.29 485.85 L184.24 486.36 L185.20 486.87 L186.16 487.38 L187.11 487.87 L188.07 488.34 L189.03 488.78 L189.99 489.18 L190.94 489.53 L191.90 489.83 L192.86 490.08 L193.81 490.27 L194.77 490.39 L195.73 490.46 L196.69 490.47 L197.64 490.43 L198.60 490.33 L199.56 490.18 L200.51 489.99 L201.47 489.76 L202.43 489.49 L203.39 489.18 L204.34 488.85 L205.30 488.50 L206.26 488.13 L207.21 487.75 L208.17 487.36 L209.13 486.97 L210.09 486.58 L211.04 486.77 L212.00 486.41 L212.00 486.69 L211.04 487.05 L210.09 487.99 L209.13 488.37 L208.17 488.76 L207.21 489.15 L206.26 489.54 L205.30 489.92 L204.34 490.28 L203.39 490.62 L202.43 490.94 L201.47 491.23 L200.51 491.49 L199.56 491.73 L198.60 491.93 L197.64 492.09 L196.69 492.23 L195.73 492.33 L194.77 492.40 L193.81 492.43 L192.86 492.44 L191.90 492.42 L190.94 492.37 L189.99 492.30 L189.03 492.20 L188.07 492.07 L187.11 491.92 L186.16 491.74 L185.20 491.54 L184.24 491.30 L183.29 491.04 L182.33 490.75 L181.37 490.42 L180.41 490.07 L179.46 489.70 L178.50 489.31 L177.54 488.90 L176.59 488.49 L175.63 488.09 L174.67 487.69 L173.71 487.32 L172.76 486.98 L171.80 486.67 L170.84 486.41 L169.89 486.20 L168.93 486.05 L167.97 485.95 L167.01 485.91 L166.06 485.93 L165.10 486.01 L164.14 486.14 L163.19 486.32 L162.23 486.55 L161.27 486.81 L160.31 487.11 L159.36 487.44 L158.40 487.80 L157.44 488.16 L156.49 488.55 L155.53 488.93 L154.57 489.31 L153.61 489.69 L152.66 490.06 L151.70 490.40 L150.74 490.73 L149.79 491.03 L148.83 491.30 L147.87 491.53 L146.91 491.73 L145.96 491.33 L145.00 491.44Z" fill="#0e0e0e" fill-opacity="1" filter="url(#bl10)"/></svg>
<div class="a" style="left:133.5px;top:497px;width:118px;height:17px;border-bottom:1px solid #555557"></div>
<svg style="left:0;top:0;clip-path:inset(497px 0 0px 0)" width="960" height="540"><defs><linearGradient id="sg11" gradientUnits="userSpaceOnUse" x1="145" y1="0" x2="212" y2="0"><stop offset="0" stop-color="#111" stop-opacity="0.15"/><stop offset="0.4" stop-color="#111" stop-opacity="1"/><stop offset="0.7" stop-color="#111" stop-opacity="1"/><stop offset="1" stop-color="#111" stop-opacity="0.2"/></linearGradient></defs><path d="M145.00 508.30 L145.96 508.04 L146.91 507.76 L147.87 507.44 L148.83 507.09 L149.79 506.71 L150.74 506.30 L151.70 505.87 L152.66 505.42 L153.61 504.95 L154.57 504.47 L155.53 503.99 L156.49 503.51 L157.44 503.03 L158.40 502.57 L159.36 502.12 L160.31 501.69 L161.27 501.29 L162.23 500.91 L163.19 500.57 L164.14 500.27 L165.10 500.01 L166.06 499.79 L167.01 499.62 L167.97 499.49 L168.93 499.42 L169.89 499.39 L170.84 499.41 L171.80 499.48 L172.76 499.60 L173.71 499.76 L174.67 499.96 L175.63 500.21 L176.59 500.49 L177.54 500.80 L178.50 501.14 L179.46 501.50 L180.41 501.89 L181.37 502.28 L182.33 502.69 L183.29 503.10 L184.24 503.51 L185.20 503.91 L186.16 504.30 L187.11 504.67 L188.07 505.02 L189.03 505.35 L189.99 505.65 L190.94 505.91 L191.90 506.14 L192.86 506.34 L193.81 506.49 L194.77 506.60 L195.73 506.67 L196.69 506.70 L197.64 506.69 L198.60 506.64 L199.56 506.55 L200.51 506.43 L201.47 506.27 L202.43 506.08 L203.39 505.87 L204.34 505.63 L205.30 505.37 L206.26 505.11 L207.21 504.83 L208.17 504.55 L209.13 504.28 L210.09 504.01 L211.04 503.76 L212.00 503.55 L212.00 503.55 L211.04 504.05 L210.09 504.56 L209.13 505.06 L208.17 505.57 L207.21 506.07 L206.26 506.56 L205.30 507.04 L204.34 507.50 L203.39 507.94 L202.43 508.34 L201.47 508.72 L200.51 509.06 L199.56 509.36 L198.60 509.62 L197.64 509.83 L196.69 510.00 L195.73 510.12 L194.77 510.19 L193.81 510.21 L192.86 510.18 L191.90 510.11 L190.94 509.99 L189.99 509.83 L189.03 509.63 L188.07 509.39 L187.11 509.12 L186.16 508.82 L185.20 508.50 L184.24 508.15 L183.29 507.79 L182.33 507.42 L181.37 507.05 L180.41 506.67 L179.46 506.30 L178.50 505.94 L177.54 505.59 L176.59 505.27 L175.63 504.97 L174.67 504.69 L173.71 504.45 L172.76 504.24 L171.80 504.07 L170.84 503.93 L169.89 503.84 L168.93 503.79 L167.97 503.77 L167.01 503.80 L166.06 503.87 L165.10 503.97 L164.14 504.12 L163.19 504.29 L162.23 504.50 L161.27 504.73 L160.31 504.98 L159.36 505.26 L158.40 505.54 L157.44 505.84 L156.49 506.14 L155.53 506.44 L154.57 506.74 L153.61 507.02 L152.66 507.29 L151.70 507.54 L150.74 507.76 L149.79 507.95 L148.83 508.11 L147.87 508.23 L146.91 508.30 L145.96 508.33 L145.00 508.30Z" fill="url(#sg11)" filter="url(#bl11)"/></svg>
<div class="a" style="left:133.5px;top:514px;width:118px;height:16px;border-bottom:1px solid #555557"></div>
<svg style="left:0;top:0;clip-path:inset(514px 0 17px 0)" width="960" height="540"><path d="M150.00 525.30 L150.93 525.12 L151.86 524.87 L152.79 524.57 L153.71 524.22 L154.64 523.83 L155.57 523.40 L156.50 522.94 L157.43 522.46 L158.36 521.95 L159.29 521.44 L160.21 520.92 L161.14 520.40 L162.07 519.88 L163.00 519.38 L163.93 518.89 L164.86 518.43 L165.79 518.00 L166.71 517.61 L167.64 517.25 L168.57 516.93 L169.50 516.67 L170.43 516.45 L171.36 516.28 L172.29 516.17 L173.21 516.12 L174.14 516.12 L175.07 516.17 L176.00 516.27 L176.93 516.42 L177.86 516.60 L178.79 516.83 L179.71 517.09 L180.64 517.38 L181.57 517.70 L182.50 518.04 L183.43 518.40 L184.36 518.78 L185.29 519.17 L186.21 519.56 L187.14 519.95 L188.07 520.33 L189.00 520.70 L189.93 521.06 L190.86 521.40 L191.79 521.71 L192.71 521.99 L193.64 522.24 L194.57 522.47 L195.50 522.67 L196.43 522.83 L197.36 522.96 L198.29 523.06 L199.21 523.12 L200.14 523.14 L201.07 523.13 L202.00 523.09 L202.93 523.01 L203.86 522.90 L204.79 522.77 L205.71 522.60 L206.64 522.42 L207.57 522.22 L208.50 522.00 L209.43 521.77 L210.36 521.54 L211.29 521.32 L212.21 521.09 L213.14 520.88 L214.07 520.69 L215.00 520.55 L215.00 520.55 L214.07 521.12 L213.14 521.69 L212.21 522.25 L211.29 522.81 L210.36 523.36 L209.43 523.90 L208.50 524.42 L207.57 524.91 L206.64 525.38 L205.71 525.82 L204.79 526.22 L203.86 526.58 L202.93 526.90 L202.00 527.17 L201.07 527.39 L200.14 527.56 L199.21 527.67 L198.29 527.73 L197.36 527.74 L196.43 527.69 L195.50 527.59 L194.57 527.44 L193.64 527.24 L192.71 526.99 L191.79 526.71 L190.86 526.40 L189.93 526.06 L189.00 525.70 L188.07 525.33 L187.14 524.95 L186.21 524.56 L185.29 524.17 L184.36 523.78 L183.43 523.40 L182.50 523.04 L181.57 522.70 L180.64 522.38 L179.71 522.09 L178.79 521.83 L177.86 521.60 L176.93 521.42 L176.00 521.27 L175.07 521.17 L174.14 521.11 L173.21 521.09 L172.29 521.09 L171.36 521.14 L170.43 521.21 L169.50 521.32 L168.57 521.45 L167.64 521.61 L166.71 521.80 L165.79 522.01 L164.86 522.24 L163.93 522.48 L163.00 522.73 L162.07 522.99 L161.14 523.26 L160.21 523.52 L159.29 523.77 L158.36 524.02 L157.43 524.25 L156.50 524.47 L155.57 524.66 L154.64 524.83 L153.71 524.98 L152.79 525.09 L151.86 525.18 L150.93 525.25 L150.00 525.30Z" fill="#0e0e0e" fill-opacity="1" filter="url(#bl12)"/></svg>
<div class="a" style="left:133px;top:523px;width:128px;height:15px;background:#77787c"></div>
<svg style="left:235px;top:527px" width="9" height="10" viewBox="0 0 9 10"><path d="M0.5 0.5 H8.5 V7 L6 9.5 H0.5Z" fill="#fff" stroke="#444" stroke-width="0.6"/><path d="M6 9.5 V7 H8.5" fill="#888"/></svg>
<svg style="left:248px;top:527px" width="9" height="10" viewBox="0 0 9 10"><path d="M1 2.5 H8 L7.2 9.5 H1.8Z" fill="#eee" stroke="#333" stroke-width="0.7"/><rect x="2" y="0.5" width="5" height="2" fill="#ccc" stroke="#333" stroke-width="0.5"/></svg>
<div class="a" style="left:264px;top:33px;width:667px;height:17px;background:#77787c;border-top:1px solid #848487"></div>
<div class="a" style="left:264px;top:50px;width:667px;height:2.5px;background:#505050"></div>
<div class="a" style="left:266px;top:36px;width:28px;height:13.5px;background:linear-gradient(#efefef,#dedede);border-radius:1px"></div>
<svg style="left:273px;top:37px" width="14" height="11" viewBox="0 0 14 11"><path d="M5.58 5.50 L5.53 5.37 L5.50 5.22 L5.50 5.07 L5.53 4.92 L5.60 4.77 L5.70 4.61 L5.83 4.47 L6.00 4.33 L6.19 4.21 L6.42 4.10 L6.68 4.01 L6.95 3.95 L7.25 3.91 L7.56 3.90 L7.87 3.92 L8.19 3.97 L8.51 4.05 L8.81 4.16 L9.10 4.30 L9.36 4.48 L9.59 4.68 L9.79 4.90 L9.94 5.15 L10.05 5.41 L10.11 5.69 L10.11 5.98 L10.06 6.27 L9.96 6.56 L9.79 6.84 L9.57 7.11 L9.30 7.36 L8.97 7.59 L8.60 7.79 L8.18 7.96 L7.73 8.09 L7.24 8.18 L6.74 8.23 L6.22 8.23 L5.70 8.18 L5.18 8.09 L4.68 7.94 L4.20 7.75 L3.76 7.51 L3.36 7.23 L3.00 6.91 L2.71 6.56 L2.48 6.18 L2.33 5.77 L2.25 5.35 L2.25 4.92 L2.33 4.48 L2.50 4.05 L2.74 3.64 L3.07 3.24 L3.48 2.87 L3.95 2.54 L4.49 2.25 L5.09 2.01 L5.74 1.82 L6.42 1.69 L7.14 1.63 L7.86 1.62 L8.59 1.69 L9.31 1.82 L10.01 2.02 L10.67 2.28 L11.29 2.60 L11.85 2.98 L12.33 3.41 L12.74 3.89 L13.05 4.40 L13.27 4.95 L13.39 5.52 L13.40 6.09 L13.31 6.67 L13.10 7.25 L12.78 7.80 L12.36 8.33 L11.84 8.82 L11.23 9.26 L10.53 9.65 L9.76 9.98 L8.93 10.23 L8.04 10.41 L7.13 10.51 L6.19 10.53 L5.25 10.46 L4.32 10.30 L3.42 10.07 L2.56 9.75" stroke="#4a4a4a" stroke-width="1.5" fill="none" stroke-linecap="round"/></svg>
<div class="a" style="left:298.5px;top:36px;width:1px;height:14px;background:#69696b;border-right:1px solid #808083"></div>
<div class="a" style="left:405px;top:36px;width:1px;height:14px;background:#69696b;border-right:1px solid #808083"></div>
<div class="a" style="left:445px;top:36px;width:1px;height:14px;background:#69696b;border-right:1px solid #808083"></div>
<div class="a" style="left:518px;top:36px;width:1px;height:14px;background:#69696b;border-right:1px solid #808083"></div>
<div class="a" style="left:575px;top:36px;width:1px;height:14px;background:#69696b;border-right:1px solid #808083"></div>
<div class="a" style="left:633px;top:36px;width:1px;height:14px;background:#69696b;border-right:1px solid #808083"></div>
<svg style="left:305px;top:37px" width="11" height="12" viewBox="0 0 11 12"><path d="M1.5 1 H6.5 L10 4.5 V11.5 H1.5Z" fill="#fff" stroke="#222" stroke-width="1"/><path d="M6.5 1 V4.5 H10" stroke="#222" stroke-width="0.8" fill="none"/><path d="M0 0 L3 0 L0 3Z" fill="#111"/></svg>
<svg style="left:320px;top:37px" width="14" height="12" viewBox="0 0 14 12"><path d="M1 3 H5 L6 4 H11 V11 H1Z" fill="#ddd" stroke="#222" stroke-width="1"/><path d="M1 11 L3 6 H13 L11 11Z" fill="#c8c8c8" stroke="#222" stroke-width="0.9"/><path d="M8 2 Q10 0 12 2" stroke="#111" stroke-width="1.2" fill="none"/><path d="M11.5 0.5 L13 2.5 L10.5 3Z" fill="#111"/></svg>
<svg style="left:338px;top:37px" width="11" height="12" viewBox="0 0 11 12"><rect x="0.5" y="0.5" width="10" height="11" fill="#999" stroke="#7a7a7a" stroke-width="1"/><rect x="2" y="2" width="7" height="6" fill="#a8a8a8"/></svg>
<svg style="left:355px;top:37px" width="13" height="13" viewBox="0 0 13 13"><defs><linearGradient id="selg" x1="0" y1="0" x2="0" y2="1"><stop offset="0" stop-color="#7ec8f0"/><stop offset="0.35" stop-color="#fff"/><stop offset="0.75" stop-color="#f0f4ff"/><stop offset="1" stop-color="#4a8ae0"/></linearGradient></defs><rect x="0.5" y="0.5" width="8" height="8" fill="url(#selg)" stroke="#1d4fb8" stroke-width="1"/><path d="M6 4.8 L12.5 9 L9.8 9.6 L11.8 12.2 L10.6 13 L8.8 10.4 L7.2 12.5Z" fill="#111"/></svg>
<svg style="left:372px;top:37px" width="13" height="13" viewBox="0 0 13 13"><defs><linearGradient id="selg" x1="0" y1="0" x2="0" y2="1"><stop offset="0" stop-color="#7ec8f0"/><stop offset="0.35" stop-color="#fff"/><stop offset="0.75" stop-color="#f0f4ff"/><stop offset="1" stop-color="#4a8ae0"/></linearGradient></defs><rect x="0.5" y="0.5" width="8" height="8" fill="url(#selg)" stroke="#1d4fb8" stroke-width="1"/><path d="M6 4.8 L12.5 9 L9.8 9.6 L11.8 12.2 L10.6 13 L8.8 10.4 L7.2 12.5Z" fill="#111"/></svg>
<svg style="left:388px;top:37px" width="13" height="13" viewBox="0 0 13 13"><defs><linearGradient id="selg" x1="0" y1="0" x2="0" y2="1"><stop offset="0" stop-color="#7ec8f0"/><stop offset="0.35" stop-color="#fff"/><stop offset="0.75" stop-color="#f0f4ff"/><stop offset="1" stop-color="#4a8ae0"/></linearGradient></defs><rect x="0.5" y="0.5" width="8" height="8" fill="url(#selg)" stroke="#1d4fb8" stroke-width="1"/><path d="M6 4.8 L12.5 9 L9.8 9.6 L11.8 12.2 L10.6 13 L8.8 10.4 L7.2 12.5Z" fill="#111"/></svg>
<svg style="left:410px;top:37px" width="13" height="12" viewBox="0 0 13 12"><path d="M7.5 3.5 H9 A3.2 3.2 0 0 1 9 9.9 H4" stroke="#5e5e60" stroke-width="1.6" fill="none"/><path d="M3 3.5 H7" stroke="#5e5e60" stroke-width="1.4" stroke-dasharray="0.9 0.6"/><path d="M0.8 9.9 L4.3 7.2 V12.6Z" fill="#5e5e60"/></svg>
<svg style="left:427px;top:37px" width="13" height="12" viewBox="0 0 13 12"><path d="M9 3.5 H5 A3.2 3.2 0 0 0 5 9.9 H6" stroke="#5e5e60" stroke-width="1.6" fill="none"/><path d="M6 9.9 H10" stroke="#5e5e60" stroke-width="1.4" stroke-dasharray="0.9 0.6"/><path d="M12.2 3.5 L8.7 0.8 V6.2Z" fill="#5e5e60"/></svg>
<svg style="left:449px;top:36px" width="13" height="13" viewBox="0 0 13 13"><circle cx="6.50" cy="1.90" r="1.25" fill="#2a2a2a"/><circle cx="2.52" cy="4.20" r="1.25" fill="#2a2a2a"/><circle cx="2.52" cy="8.80" r="1.25" fill="#2a2a2a"/><circle cx="6.50" cy="11.10" r="1.25" fill="#2a2a2a"/><circle cx="10.48" cy="8.80" r="1.25" fill="#2a2a2a"/><circle cx="10.48" cy="4.20" r="1.25" fill="#2a2a2a"/></svg>
<svg style="left:467px;top:36px" width="13" height="13" viewBox="0 0 13 13"><rect x="3.5" y="3.5" width="6" height="6" rx="1" fill="#a8a8aa" stroke="#8e8e90" stroke-width="0.8"/><path d="M4 1 H9 M4 12 H9 M1 4 V9 M12 4 V9" stroke="#9a9a9c" stroke-width="1.3" stroke-dasharray="1 0.5"/></svg>
<svg style="left:483px;top:36px" width="14" height="13" viewBox="0 0 14 13"><path d="M5 6.5 L9 2.5 L13 7 L8.5 12 L4.5 9Z" fill="#f4f4f4" stroke="#222" stroke-width="0.8"/><path d="M0.8 11.5 Q1.5 7 5.5 5.5 L6.5 7 Q3 9 2 12Z" fill="#111"/><path d="M8 3 L10.5 0.8 L12 2.5" stroke="#333" stroke-width="1.1" fill="none"/><path d="M9.5 4 L12 1.8" stroke="#bbb" stroke-width="0.8"/></svg>
<svg style="left:500px;top:36px" width="13" height="13" viewBox="0 0 13 13"><path d="M3.5 3.5 Q6.5 6 9.5 3.5 Q7 6.5 9.5 9.5 Q6.5 7 3.5 9.5 Q6 6.5 3.5 3.5Z" fill="none" stroke="#2a2a2a" stroke-width="1.6"/><path d="M0.8 0.8 L3.5 3.5 M12.2 0.8 L9.5 3.5 M0.8 12.2 L3.5 9.5 M12.2 12.2 L9.5 9.5" stroke="#2a2a2a" stroke-width="1.6"/><circle cx="1.2" cy="1.2" r="1.1" fill="#2a2a2a"/><circle cx="11.8" cy="1.2" r="1.1" fill="#2a2a2a"/><circle cx="1.2" cy="11.8" r="1.1" fill="#2a2a2a"/><circle cx="11.8" cy="11.8" r="1.1" fill="#2a2a2a"/></svg>
<svg style="left:523px;top:37px" width="12" height="12" viewBox="0 0 12 12"><rect x="1" y="1" width="10" height="10" fill="none" stroke="#6a6a6c" stroke-width="0.8" stroke-dasharray="1 1"/><path d="M1 11 L11 1" stroke="#6a6a6c" stroke-width="1"/></svg>
<svg style="left:540px;top:37px" width="12" height="12" viewBox="0 0 12 12"><path d="M1 11 L11 1 V11Z" fill="#6a6a6c"/><rect x="1" y="1" width="10" height="10" fill="none" stroke="#6e6e70" stroke-width="0.8"/></svg>
<svg style="left:557px;top:37px" width="12" height="12" viewBox="0 0 12 12"><rect x="1" y="1" width="10" height="10" fill="none" stroke="#5e5e60" stroke-width="0.9" stroke-dasharray="1 1"/><rect x="3" y="3" width="6" height="6" fill="#8e8e90"/></svg>
<svg style="left:580px;top:36px" width="13" height="14" viewBox="0 0 13 14"><path d="M0.8 12.5 H9.5" stroke="#2a8ce8" stroke-width="1.6"/><path d="M0.8 3.5 V12.5 M0.8 3.5 L9.5 12.5" stroke="#1a1a1a" stroke-width="1.1" fill="none"/><path d="M0.8 9 V12.5" stroke="#2a8ce8" stroke-width="1.1"/><path d="M7 1.5 Q8.6 0.5 10.2 1.5 V10.5 L8.6 12.5 L7 10.5Z" fill="#e8e8e8" stroke="#1a1a1a" stroke-width="0.8"/><path d="M8.6 10.5 V12.5" stroke="#111" stroke-width="1"/></svg>
<svg style="left:596px;top:36px" width="13" height="14" viewBox="0 0 13 14"><path d="M1 12 H10.5 M1 12 Q1 7.5 5 6 H9" stroke="#1a1a1a" stroke-width="1.1" fill="none"/><path d="M4 6.5 Q6 5.6 7.5 5.6" stroke="#2a8ce8" stroke-width="1.2" fill="none"/><path d="M10.5 9.5 V12.5" stroke="#2a8ce8" stroke-width="1.4"/><path d="M8 1.5 Q9.6 0.5 11.2 1.5 V10.5 L9.6 12.5 L8 10.5Z" fill="#e8e8e8" stroke="#1a1a1a" stroke-width="0.8"/><path d="M9.6 10.5 V12.5" stroke="#111" stroke-width="1"/></svg>
<svg style="left:613px;top:36px" width="13" height="14" viewBox="0 0 13 14"><path d="M0.5 5 H12.5 M0.5 10 H12.5 M3.5 1.5 V13.5 M9.5 1.5 V13.5" stroke="#2a8ce8" stroke-width="1.3"/><path d="M4.9 1.5 Q6.5 0.5 8.100000000000001 1.5 V10.5 L6.5 12.5 L4.9 10.5Z" fill="#e8e8e8" stroke="#1a1a1a" stroke-width="0.8"/><path d="M6.5 10.5 V12.5" stroke="#111" stroke-width="1"/></svg>
<svg style="left:636px;top:36px" width="13" height="13" viewBox="0 0 13 13"><circle cx="6.5" cy="6.5" r="6.3" fill="#1e1e1e"/><path d="M4.2 5 Q4.2 2.5 6.6 2.5 Q9 2.5 9 4.7 Q9 6 7.3 6.8 V8" stroke="#fff" stroke-width="1.7" fill="none"/><rect x="6.3" y="9" width="2" height="2" fill="#fff"/></svg>
<svg style="left:652px;top:36px" width="13" height="13" viewBox="0 0 13 13"><circle cx="6.5" cy="6.5" r="6.3" fill="#1e1e1e"/><path d="M4.2 5 Q4.2 2.5 6.6 2.5 Q9 2.5 9 4.7 Q9 6 7.3 6.8 V8" stroke="#fff" stroke-width="1.7" fill="none"/><rect x="6.3" y="9" width="2" height="2" fill="#fff"/></svg>
<div class="a" style="left:264px;top:52.5px;width:667px;height:13.5px;background:#4e4e4e"></div>
<div class="a" style="left:264px;top:52.5px;width:70px;height:13.5px;background:linear-gradient(#9c9c9c,#7e7e7e)"></div>
<svg style="left:323.5px;top:56px" width="6" height="6" viewBox="0 0 6 6"><path d="M0.8 0.8 L5.2 5.2 M5.2 0.8 L0.8 5.2" stroke="#222" stroke-width="1.5"/></svg>
<div class="a" style="left:923px;top:53px;width:8px;height:12px;background:linear-gradient(#868688,#6e6e70);border:1px solid #5a5a5c;border-radius:2px"></div>
<svg style="left:925px;top:58px" width="4" height="3" viewBox="0 0 4 3"><path d="M0 0 H4 L2 2.5Z" fill="#333"/></svg>
<div class="a" style="left:264px;top:65px;width:667px;height:1.5px;background:#5c5c5c"></div>
<div class="a" style="left:264.5px;top:66.5px;width:658.5px;height:446.5px;background:#424242"></div>
<div class="a" style="left:435px;top:66.5px;width:317px;height:446.5px;background:#fff"></div>
<svg style="left:451px;top:165px" width="3" height="3" viewBox="0 0 3 3"><rect x="0.5" y="0.5" width="2" height="2" fill="#fff" stroke="#777" stroke-width="1"/></svg>
<div class="a" style="left:923px;top:66.5px;width:8px;height:446.5px;background:#6e6e71;border-left:1px solid #606062"></div>
<div class="a" style="left:923.5px;top:67px;width:7px;height:8px;background:#7c7c7f;border:1px solid #606062;border-radius:1px"></div>
<svg style="left:925px;top:70px" width="4" height="3" viewBox="0 0 4 3"><path d="M0 3 L2 0 L4 3Z" fill="#444"/></svg>
<div class="a" style="left:923.5px;top:204.5px;width:7px;height:170px;background:linear-gradient(90deg,#828285,#78787b);border:1px solid #606062;border-radius:1px"></div>
<svg style="left:924.5px;top:287px" width="5" height="5" viewBox="0 0 5 5"><path d="M0 0.5 H5 M0 2.5 H5 M0 4.5 H5" stroke="#555" stroke-width="0.8"/></svg>
<div class="a" style="left:923.5px;top:505px;width:7px;height:8px;background:#7c7c7f;border:1px solid #606062;border-radius:1px"></div>
<svg style="left:925px;top:508px" width="4" height="3" viewBox="0 0 4 3"><path d="M0 0 L2 3 L4 0Z" fill="#444"/></svg>
<div class="a" style="left:264px;top:513px;width:667px;height:9px;background:#77787c"></div>
<svg style="left:265px;top:513px" width="70" height="9" viewBox="0 0 70 9"><rect x="0.5" y="0.5" width="69" height="8" fill="#7c7c7f" stroke="#5c5c5e"/><path d="M1 8.5 L63 0.5 H69.5 V8.5Z" fill="#3a3a3b"/><rect x="24" y="0" width="2.5" height="9" fill="#707073" stroke="#5a5a5c" stroke-width="0.6"/></svg>
<svg style="left:337px;top:513px" width="10" height="9" viewBox="0 0 10 9"><circle cx="4.5" cy="4" r="3.6" fill="#eee" stroke="#333" stroke-width="0.8"/><path d="M3 4 H6" stroke="#222" stroke-width="1.3"/><path d="M7 6.5 L9 8.5" stroke="#111" stroke-width="1.3"/></svg>
<svg style="left:351px;top:513px" width="10" height="9" viewBox="0 0 10 9"><circle cx="4.5" cy="4" r="3.6" fill="#eee" stroke="#333" stroke-width="0.8"/><path d="M2.8 4 H6.2 M4.5 2.3 V5.7" stroke="#222" stroke-width="1.3"/><path d="M7 6.5 L9 8.5" stroke="#111" stroke-width="1.3"/></svg>
<svg style="left:366px;top:513px" width="8" height="9" viewBox="0 0 8 9"><rect x="0" y="0" width="8" height="9" fill="#111"/><rect x="1.5" y="1.5" width="5" height="6" fill="none" stroke="#555" stroke-width="0.6"/><rect x="2.5" y="2.5" width="3" height="4" fill="#000"/></svg>
<div class="a" style="left:375.3px;top:513px;width:2.5px;height:9px;background:#707073;border:0.5px solid #5a5a5c"></div>
<svg style="left:378px;top:513px" width="34" height="9" viewBox="0 0 34 9"><rect x="0.5" y="0.5" width="33" height="8" fill="#3a3a3b" stroke="#5c5c5e"/><path d="M1 1 L13 8 L24 8 Q30.5 7.5 33 3 V1Z" fill="#7c7c7f"/></svg>
<svg style="left:411px;top:513px" width="36" height="9" viewBox="0 0 36 9"><rect x="2.5" y="0.5" width="33" height="8" fill="#3a3a3b" stroke="#5c5c5e"/><path d="M3 1 H10 Q5 2 3 4.5Z M21 1 L35 8 V1Z" fill="#7c7c7f"/><rect x="0.3" y="0" width="2.4" height="9" fill="#707073" stroke="#5a5a5c" stroke-width="0.5"/></svg>
<svg style="left:450px;top:514px" width="10" height="8" viewBox="0 0 10 8"><path d="M2.5 6 A3.5 3.5 0 1 1 8 6.5" stroke="#111" stroke-width="1.5" fill="none"/><path d="M0 5 H4.5 L2.3 8Z" fill="#111"/></svg>
<svg style="left:463px;top:514px" width="10" height="8" viewBox="0 0 10 8"><g transform="translate(10,0) scale(-1,1)"><path d="M2.5 6 A3.5 3.5 0 1 1 8 6.5" stroke="#111" stroke-width="1.5" fill="none"/><path d="M0 5 H4.5 L2.3 8Z" fill="#111"/></g></svg>
<svg style="left:479px;top:513px" width="9" height="9" viewBox="0 0 9 9"><circle cx="8.10" cy="4.50" r="0.9" fill="#555"/><circle cx="7.05" cy="7.05" r="0.9" fill="#555"/><circle cx="4.50" cy="8.10" r="0.9" fill="#555"/><circle cx="1.95" cy="7.05" r="0.9" fill="#555"/><circle cx="0.90" cy="4.50" r="0.9" fill="#555"/><circle cx="1.95" cy="1.95" r="0.9" fill="#555"/><circle cx="4.50" cy="0.90" r="0.9" fill="#555"/><circle cx="7.05" cy="1.95" r="0.9" fill="#555"/><circle cx="4.5" cy="4.5" r="3" fill="none" stroke="#666" stroke-width="0.6"/></svg>
<div class="a" style="left:490px;top:513px;width:8px;height:8.5px;background:#7e7e81;border:1px solid #616163;border-radius:1px"></div>
<svg style="left:492px;top:515px" width="4" height="5" viewBox="0 0 4 5"><path d="M3.5 0 L0.5 2.5 L3.5 5Z" fill="#333"/></svg>
<div class="a" style="left:498px;top:513px;width:417px;height:9px;background:#69696c;border-top:1px solid #606062"></div>
<div class="a" style="left:602px;top:513px;width:208px;height:8.5px;background:linear-gradient(#888,#7a7a7d);border:1px solid #5e5e60;border-radius:2px"></div>
<svg style="left:704px;top:515px" width="5" height="5" viewBox="0 0 5 5"><path d="M0.5 0 V5 M2.5 0 V5 M4.5 0 V5" stroke="#555" stroke-width="0.8"/></svg>
<div class="a" style="left:915px;top:513px;width:8px;height:8.5px;background:#7e7e81;border:1px solid #616163;border-radius:1px"></div>
<svg style="left:917px;top:515px" width="4" height="5" viewBox="0 0 4 5"><path d="M0.5 0 L3.5 2.5 L0.5 5Z" fill="#333"/></svg>
<div class="a" style="left:923px;top:513px;width:8px;height:9px;background:#727275"></div>
<div class="a" style="left:264px;top:522px;width:667px;height:16px;background:#77787c;border-top:1px solid #828285"></div>
<div class="a" style="left:265px;top:524px;width:652px;height:11px;background:linear-gradient(#3e3e3e,#4e4e4e 2px,#474747)"></div>
<div class="a" style="left:266px;top:524.5px;width:12px;height:10px;background:#545454;border:1px solid #484848"></div>
<svg style="left:268px;top:526px" width="10" height="8" viewBox="0 0 10 8"><path d="M1.5 2.5 L3.5 4.5 L1.5 6.5Z" fill="#9a9a9a"/><rect x="5" y="1.5" width="4" height="1.2" fill="#9a9a9a"/><rect x="5" y="4" width="4" height="1.2" fill="#9a9a9a"/><rect x="5" y="6.5" width="4" height="1.2" fill="#9a9a9a"/></svg>
<div class="a" style="left:278.5px;top:525px;width:20px;height:12px;background:#77787c"></div>
<svg style="left:282px;top:526px" width="11" height="9" viewBox="0 0 11 9"><rect x="0.5" y="0.5" width="10" height="8" fill="#f0f0f0" stroke="#333" stroke-width="0.8"/><path d="M2.5 1 V8 M4.5 1 V8 M6.5 1 V8" stroke="#555" stroke-width="0.8"/><path d="M1.5 1 V8" stroke="#c07050" stroke-width="0.6"/><circle cx="8.5" cy="3" r="1" fill="#2050c0"/><circle cx="8.5" cy="6.5" r="1" fill="#2050c0"/></svg>
<div class="a" style="left:918px;top:523px;width:13px;height:15px;background:linear-gradient(#5a5a5a,#686868)"></div>
<svg style="left:920px;top:531px" width="9" height="5" viewBox="0 0 9 5"><path d="M0.5 4.5 L4.5 0.8 L8.5 4.5" stroke="#a8a8a8" stroke-width="1.5" fill="none"/></svg>
<div class="a" style="left:931px;top:48px;width:29px;height:490px;background:linear-gradient(90deg,#505050,#5a5a5a 12%,#626262 60%,#666)"></div>
<div class="a" style="left:931px;top:48px;width:2.5px;height:490px;background:#555"></div>
<div class="a" style="left:934.5px;top:49px;width:23px;height:28px;background:#77787c;border:1px solid #4a4a4a;box-shadow:inset 1px 1px 0 #838386"></div>
<svg style="left:936.5px;top:55.5px" width="13" height="13" viewBox="0 0 12 12"><defs><linearGradient id="fg" x1="0" y1="0" x2="1" y2="1"><stop offset="0" stop-color="#e6e6e6"/><stop offset="1" stop-color="#8a8a8a"/></linearGradient></defs><path d="M1.5 10.5 V2 Q1.5 1 2.5 1 H5.5 L6.5 2 H11" fill="none" stroke="#222" stroke-width="1.1"/><path d="M1.5 10.5 V2.5 H6 L7 3.5 H10.5 V5 Z" fill="url(#fg)"/><path d="M1.5 10.5 L4.5 4.5 H11" fill="none" stroke="#666" stroke-width="0.7"/></svg>
<svg style="left:944px;top:62px" width="10" height="10" viewBox="0 0 10 10"><rect x="0.5" y="0.5" width="9" height="9.5" fill="#fff" stroke="#444" stroke-width="0.8"/><path d="M1 8 L3 4 L4 5.5 L5 2.5 L6.5 6 L7.5 4.5 L9 8Z" fill="#222"/><rect x="1" y="8" width="8" height="1.8" fill="#999"/></svg>
<div class="a" style="left:934.5px;top:80px;width:23px;height:28px;background:#77787c;border:1px solid #4a4a4a;box-shadow:inset 1px 1px 0 #838386"></div>
<svg style="left:936.5px;top:86.5px" width="13" height="13" viewBox="0 0 12 12"><defs><linearGradient id="fg" x1="0" y1="0" x2="1" y2="1"><stop offset="0" stop-color="#e6e6e6"/><stop offset="1" stop-color="#8a8a8a"/></linearGradient></defs><path d="M1.5 10.5 V2 Q1.5 1 2.5 1 H5.5 L6.5 2 H11" fill="none" stroke="#222" stroke-width="1.1"/><path d="M1.5 10.5 V2.5 H6 L7 3.5 H10.5 V5 Z" fill="url(#fg)"/><path d="M1.5 10.5 L4.5 4.5 H11" fill="none" stroke="#666" stroke-width="0.7"/></svg>
<svg style="left:944px;top:93px" width="10" height="10" viewBox="0 0 10 10"><rect x="0.5" y="0.5" width="9" height="9.5" fill="#fff" stroke="#444" stroke-width="0.8"/><path d="M1 9 Q3 3 9 2.5 V5 Q5 5 4 9Z" fill="#333"/><circle cx="7" cy="7" r="1.5" fill="#555"/></svg>
<div class="a" style="left:934.5px;top:111px;width:23px;height:28px;background:#77787c;border:1px solid #4a4a4a;box-shadow:inset 1px 1px 0 #838386"></div>
<svg style="left:936.5px;top:117.5px" width="13" height="13" viewBox="0 0 12 12"><defs><linearGradient id="fg" x1="0" y1="0" x2="1" y2="1"><stop offset="0" stop-color="#e6e6e6"/><stop offset="1" stop-color="#8a8a8a"/></linearGradient></defs><path d="M1.5 10.5 V2 Q1.5 1 2.5 1 H5.5 L6.5 2 H11" fill="none" stroke="#222" stroke-width="1.1"/><path d="M1.5 10.5 V2.5 H6 L7 3.5 H10.5 V5 Z" fill="url(#fg)"/><path d="M1.5 10.5 L4.5 4.5 H11" fill="none" stroke="#666" stroke-width="0.7"/></svg>
<svg style="left:944px;top:124px" width="10" height="10" viewBox="0 0 10 10"><path d="M0.5 0.5 L5 5 L0.5 9.5Z M9.5 0.5 L5 5 L9.5 9.5Z" fill="#aaa"/><path d="M0.5 0.5 L5 5 L9.5 0.5Z M0.5 9.5 L5 5 L9.5 9.5Z" fill="#d8d8d8"/></svg>
<div class="a" style="left:934.5px;top:142px;width:23px;height:28px;background:#77787c;border:1px solid #4a4a4a;box-shadow:inset 1px 1px 0 #838386"></div>
<svg style="left:936.5px;top:148.5px" width="13" height="13" viewBox="0 0 12 12"><defs><linearGradient id="fg" x1="0" y1="0" x2="1" y2="1"><stop offset="0" stop-color="#e6e6e6"/><stop offset="1" stop-color="#8a8a8a"/></linearGradient></defs><path d="M1.5 10.5 V2 Q1.5 1 2.5 1 H5.5 L6.5 2 H11" fill="none" stroke="#222" stroke-width="1.1"/><path d="M1.5 10.5 V2.5 H6 L7 3.5 H10.5 V5 Z" fill="url(#fg)"/><path d="M1.5 10.5 L4.5 4.5 H11" fill="none" stroke="#666" stroke-width="0.7"/></svg>
<svg style="left:944px;top:155px" width="10" height="10" viewBox="0 0 10 10"><rect x="0.0" y="0.0" width="1.7" height="1.7" fill="#111"/><rect x="0.0" y="3.4" width="1.7" height="1.7" fill="#111"/><rect x="0.0" y="6.8" width="1.7" height="1.7" fill="#111"/><rect x="1.7" y="1.7" width="1.7" height="1.7" fill="#111"/><rect x="1.7" y="5.1" width="1.7" height="1.7" fill="#111"/><rect x="1.7" y="8.5" width="1.7" height="1.7" fill="#111"/><rect x="3.4" y="0.0" width="1.7" height="1.7" fill="#111"/><rect x="3.4" y="3.4" width="1.7" height="1.7" fill="#111"/><rect x="3.4" y="6.8" width="1.7" height="1.7" fill="#111"/><rect x="5.1" y="1.7" width="1.7" height="1.7" fill="#111"/><rect x="5.1" y="5.1" width="1.7" height="1.7" fill="#111"/><rect x="5.1" y="8.5" width="1.7" height="1.7" fill="#111"/><rect x="6.8" y="0.0" width="1.7" height="1.7" fill="#111"/><rect x="6.8" y="3.4" width="1.7" height="1.7" fill="#111"/><rect x="6.8" y="6.8" width="1.7" height="1.7" fill="#111"/><rect x="8.5" y="1.7" width="1.7" height="1.7" fill="#111"/><rect x="8.5" y="5.1" width="1.7" height="1.7" fill="#111"/><rect x="8.5" y="8.5" width="1.7" height="1.7" fill="#111"/><rect x="0" y="0" width="10" height="10" fill="#fff" opacity="0.0"/></svg>
<div class="a" style="left:934.5px;top:173px;width:23px;height:28px;background:#77787c;border:1px solid #4a4a4a;box-shadow:inset 1px 1px 0 #838386"></div>
<svg style="left:936.5px;top:179.5px" width="13" height="13" viewBox="0 0 12 12"><defs><linearGradient id="fg" x1="0" y1="0" x2="1" y2="1"><stop offset="0" stop-color="#e6e6e6"/><stop offset="1" stop-color="#8a8a8a"/></linearGradient></defs><path d="M1.5 10.5 V2 Q1.5 1 2.5 1 H5.5 L6.5 2 H11" fill="none" stroke="#222" stroke-width="1.1"/><path d="M1.5 10.5 V2.5 H6 L7 3.5 H10.5 V5 Z" fill="url(#fg)"/><path d="M1.5 10.5 L4.5 4.5 H11" fill="none" stroke="#666" stroke-width="0.7"/></svg>
<svg style="left:944px;top:186px" width="10" height="10" viewBox="0 0 10 10"><path d="M0.5 0.5 L5 5 L0.5 9.5Z M9.5 0.5 L5 5 L9.5 9.5Z" fill="#999"/><path d="M0.5 0.5 L5 5 L9.5 0.5Z M0.5 9.5 L5 5 L9.5 9.5Z" fill="#ccc"/></svg>
<div class="a" style="left:934.5px;top:204px;width:23px;height:28px;background:#77787c;border:1px solid #4a4a4a;box-shadow:inset 1px 1px 0 #838386"></div>
<svg style="left:936.5px;top:210.5px" width="13" height="13" viewBox="0 0 12 12"><defs><linearGradient id="fg" x1="0" y1="0" x2="1" y2="1"><stop offset="0" stop-color="#e6e6e6"/><stop offset="1" stop-color="#8a8a8a"/></linearGradient></defs><path d="M1.5 10.5 V2 Q1.5 1 2.5 1 H5.5 L6.5 2 H11" fill="none" stroke="#222" stroke-width="1.1"/><path d="M1.5 10.5 V2.5 H6 L7 3.5 H10.5 V5 Z" fill="url(#fg)"/><path d="M1.5 10.5 L4.5 4.5 H11" fill="none" stroke="#666" stroke-width="0.7"/></svg>
<svg style="left:944px;top:217px" width="10" height="10" viewBox="0 0 10 10"><path d="M5 9 L1 5 Q0 2 2.5 1.5 Q4 1.5 5 3 Q6 1.5 7.5 1.5 Q10 2 9 5Z" fill="none" stroke="#ddd" stroke-width="1.2"/></svg>
<div class="a" style="left:934.5px;top:235px;width:23px;height:28px;background:#77787c;border:1px solid #4a4a4a;box-shadow:inset 1px 1px 0 #838386"></div>
<svg style="left:936.5px;top:241.5px" width="13" height="13" viewBox="0 0 12 12"><defs><linearGradient id="fg" x1="0" y1="0" x2="1" y2="1"><stop offset="0" stop-color="#e6e6e6"/><stop offset="1" stop-color="#8a8a8a"/></linearGradient></defs><path d="M1.5 10.5 V2 Q1.5 1 2.5 1 H5.5 L6.5 2 H11" fill="none" stroke="#222" stroke-width="1.1"/><path d="M1.5 10.5 V2.5 H6 L7 3.5 H10.5 V5 Z" fill="url(#fg)"/><path d="M1.5 10.5 L4.5 4.5 H11" fill="none" stroke="#666" stroke-width="0.7"/></svg>
<svg style="left:944px;top:248px" width="10" height="10" viewBox="0 0 10 10"><rect x="0.5" y="0.5" width="9" height="9.5" fill="#fff" stroke="#444" stroke-width="0.8"/><path d="M1 8 L3 4 L4 5.5 L5 2.5 L6.5 6 L7.5 4.5 L9 8Z" fill="#222"/><rect x="1" y="8" width="8" height="1.8" fill="#999"/></svg>
<div class="a" style="left:934.5px;top:266px;width:23px;height:28px;background:#77787c;border:1px solid #4a4a4a;box-shadow:inset 1px 1px 0 #838386"></div>
<svg style="left:936.5px;top:272.5px" width="13" height="13" viewBox="0 0 12 12"><defs><linearGradient id="fg" x1="0" y1="0" x2="1" y2="1"><stop offset="0" stop-color="#e6e6e6"/><stop offset="1" stop-color="#8a8a8a"/></linearGradient></defs><path d="M1.5 10.5 V2 Q1.5 1 2.5 1 H5.5 L6.5 2 H11" fill="none" stroke="#222" stroke-width="1.1"/><path d="M1.5 10.5 V2.5 H6 L7 3.5 H10.5 V5 Z" fill="url(#fg)"/><path d="M1.5 10.5 L4.5 4.5 H11" fill="none" stroke="#666" stroke-width="0.7"/></svg>
<svg style="left:944px;top:279px" width="10" height="10" viewBox="0 0 10 10"><rect x="0.5" y="0.5" width="9" height="9.5" fill="#fff" stroke="#444" stroke-width="0.8"/><rect x="1.5" y="1.5" width="7" height="7.5" fill="#222"/><path d="M2.5 8 L8 2.5" stroke="#ddd" stroke-width="1"/></svg>
<div class="a" style="left:934.5px;top:297px;width:23px;height:28px;background:#77787c;border:1px solid #4a4a4a;box-shadow:inset 1px 1px 0 #838386"></div>
<svg style="left:936.5px;top:303.5px" width="13" height="13" viewBox="0 0 12 12"><defs><linearGradient id="fg" x1="0" y1="0" x2="1" y2="1"><stop offset="0" stop-color="#e6e6e6"/><stop offset="1" stop-color="#8a8a8a"/></linearGradient></defs><path d="M1.5 10.5 V2 Q1.5 1 2.5 1 H5.5 L6.5 2 H11" fill="none" stroke="#222" stroke-width="1.1"/><path d="M1.5 10.5 V2.5 H6 L7 3.5 H10.5 V5 Z" fill="url(#fg)"/><path d="M1.5 10.5 L4.5 4.5 H11" fill="none" stroke="#666" stroke-width="0.7"/></svg>
<svg style="left:944px;top:310px" width="10" height="10" viewBox="0 0 10 10"><path d="M5 0.5 L9.5 3 V7.5 L5 10 L0.5 7.5 V3Z" fill="#eee" stroke="#444" stroke-width="0.8"/><path d="M0.5 3 L5 5.5 L9.5 3 M5 5.5 V10" stroke="#444" stroke-width="0.7" fill="none"/></svg>
<div class="a" style="left:934.5px;top:328px;width:23px;height:28px;background:#77787c;border:1px solid #4a4a4a;box-shadow:inset 1px 1px 0 #838386"></div>
<svg style="left:936.5px;top:334.5px" width="13" height="13" viewBox="0 0 12 12"><defs><linearGradient id="fg" x1="0" y1="0" x2="1" y2="1"><stop offset="0" stop-color="#e6e6e6"/><stop offset="1" stop-color="#8a8a8a"/></linearGradient></defs><path d="M1.5 10.5 V2 Q1.5 1 2.5 1 H5.5 L6.5 2 H11" fill="none" stroke="#222" stroke-width="1.1"/><path d="M1.5 10.5 V2.5 H6 L7 3.5 H10.5 V5 Z" fill="url(#fg)"/><path d="M1.5 10.5 L4.5 4.5 H11" fill="none" stroke="#666" stroke-width="0.7"/></svg>
<svg style="left:944px;top:341px" width="10" height="10" viewBox="0 0 10 10"><circle cx="5" cy="1.8" r="1.4" fill="#222"/><path d="M5 3.5 V7 M2 5 H8 M5 7 L3 10 M5 7 L7 10" stroke="#222" stroke-width="1.1"/></svg>
<svg style="left:14px;top:50px" width="20" height="12" viewBox="0 0 20 12"><rect x="6.5" y="4.5" width="9" height="8" fill="#f4f4f4" stroke="#333" stroke-width="0.8"/><path d="M15.5 5 V12.5 H7" stroke="#f0f0f0" stroke-width="1" fill="none"/><rect x="3.2" y="1.8" width="8.6" height="6.8" rx="1" fill="#fff" stroke="#e81818" stroke-width="1.4"/></svg>
<svg style="left:35px;top:50px" width="21" height="12" viewBox="0 0 21 12"><rect x="6" y="2" width="9.5" height="7.5" fill="#e8e8e8"/><rect x="6" y="1.5" width="9.5" height="1.2" fill="#222"/><path d="M6 6 Q9 4.5 11 6 T15.5 5.5 V9.5 H6Z" fill="#bdbdbd"/><path d="M6 9.5 L8 7.5 L9 9.5Z" fill="#333"/></svg>
<svg style="left:57px;top:50px" width="21" height="12" viewBox="0 0 21 12"><circle cx="10.5" cy="5" r="3.2" fill="#8a8a8a"/><path d="M6 10.5 V8 Q6 6.5 8 7 L10.5 8.5 L13 7 Q15 6.5 15 8 V10.5Z" fill="#d8d8d8"/></svg>
<svg style="left:79px;top:50px" width="21" height="12" viewBox="0 0 21 12"><rect x="5.5" y="1.5" width="10" height="10" rx="4" fill="#585858"/><circle cx="10.5" cy="3.8" r="1.3" fill="#eee"/><path d="M9.5 6 H11.5 V11 H9.5Z" fill="#eee"/></svg>
<svg style="left:14px;top:182px" width="20" height="12" viewBox="0 0 20 12"><path d="M4.5 7.5 L7 10.5 L14.5 2" stroke="#e81818" stroke-width="1.8" fill="none"/><rect x="3" y="11.2" width="11" height="1.8" fill="#000"/><rect x="3.5" y="13" width="11" height="0.8" fill="#ddd"/></svg>
<svg style="left:35px;top:182px" width="21" height="12" viewBox="0 0 21 12"><path d="M5.5 3 H15 M6 5.5 H14.5 M5.5 8 H15" stroke="#bbb" stroke-width="1" stroke-dasharray="2 1"/><path d="M8 11 Q11 6.5 14 11Z" fill="#ddd"/></svg>
<svg style="left:57px;top:182px" width="21" height="12" viewBox="0 0 21 12"><path d="M10.5 1.5 L8.5 8 L5.5 10.5 H15.5 L12.5 8Z" fill="#bbb"/><path d="M10.5 4 V10" stroke="#777" stroke-width="0.8"/></svg>
<svg style="left:14px;top:277px" width="20" height="12" viewBox="0 0 20 12"><ellipse cx="10" cy="3" rx="4.8" ry="1.6" fill="#d8d8d8" stroke="#1a1a1a" stroke-width="0.9"/><ellipse cx="10" cy="6.5" rx="4.8" ry="1.6" fill="#c8c8c8" stroke="#1a1a1a" stroke-width="0.9"/><ellipse cx="10" cy="10" rx="4.8" ry="1.9" fill="#f4f4f4" stroke="#1a1a1a" stroke-width="0.9"/></svg>
<svg style="left:35px;top:277px" width="21" height="12" viewBox="0 0 21 12"><rect x="3" y="1" width="8" height="10" fill="#c8c8c8"/><rect x="10" y="1" width="5" height="3" fill="#333"/><path d="M4.5 9.5 A2.6 2.6 0 1 1 8.5 7 M8 10 A2.6 2.6 0 1 1 12.5 7.5" stroke="#222" stroke-width="1.4" fill="none"/><path d="M7 3 L9 5 M11 4.5 L13 6.5" stroke="#222" stroke-width="1.2"/></svg>
<svg style="left:57px;top:277px" width="21" height="12" viewBox="0 0 21 12"><path d="M6 10 L9 7.5 M8.5 10.5 L12.5 7 M11.5 10.5 L15 7.5" stroke="#222" stroke-width="1.6" stroke-dasharray="1.2 0.8"/></svg>
<svg style="left:168px;top:50px" width="21" height="12" viewBox="0 0 21 12"><rect x="6" y="3" width="10" height="8" fill="#6a6a6a" stroke="#4a4a4a" stroke-width="0.6"/><rect x="9.5" y="1.5" width="3" height="2" fill="#222"/><rect x="7" y="5" width="6" height="5" fill="#5a5a5a" stroke="#3a3a3a" stroke-width="0.5"/><rect x="13" y="6" width="2.5" height="3" fill="#aaa"/></svg>
<svg style="left:190px;top:50px" width="21" height="12" viewBox="0 0 21 12"><rect x="3.5" y="2" width="12" height="2.4" fill="#b8b8b8"/><rect x="3.5" y="6" width="12" height="2.4" fill="#b0b0b0"/><rect x="3.5" y="10" width="12" height="1" fill="#555"/></svg>
<svg style="left:147px;top:182px" width="20" height="12" viewBox="0 0 20 12"><path d="M10 0.5 L12 6 L10.5 11.5 H9.5 L8 6Z" fill="#e8e8e8" stroke="#1a1a1a" stroke-width="0.8"/><path d="M10 4 V9" stroke="#555" stroke-width="0.6"/><rect x="7.5" y="11.5" width="5" height="1.5" fill="#111"/></svg>
<svg style="left:147px;top:277px" width="20" height="12" viewBox="0 0 20 12"><path d="M6 0.5 L8 6 L6.5 11.5 H5.5 L4 6Z" fill="#e8e8e8" stroke="#1a1a1a" stroke-width="0.8"/><rect x="3.5" y="11.5" width="5" height="1.5" fill="#111"/><path d="M11 2.5 H10 V11.5 H11" stroke="#222" stroke-width="0.9" fill="none"/><rect x="13" y="1.5" width="2.5" height="2" fill="#ddd" stroke="#333" stroke-width="0.5"/><rect x="13" y="5" width="2.5" height="2" fill="#ddd" stroke="#333" stroke-width="0.5"/><rect x="13" y="8.5" width="2.5" height="2" fill="#ddd" stroke="#333" stroke-width="0.5"/></svg>
<svg style="left:168px;top:277px" width="21" height="12" viewBox="0 0 21 12"><path d="M7 0.5 L9 6 L7.5 11 H6.5 L5 6Z" fill="#aaa" stroke="#444" stroke-width="0.7"/><rect x="10" y="6.5" width="5" height="4.5" rx="1" fill="#4e4e4e" stroke="#3a3a3a" stroke-width="0.5"/></svg>
<svg style="left:190px;top:277px" width="21" height="12" viewBox="0 0 21 12"><path d="M7 0.5 L9 6 L7.5 11 H6.5 L5 6Z" fill="#aaa" stroke="#444" stroke-width="0.7"/><path d="M11.5 3 H10.5 V11 H11.5" stroke="#444" stroke-width="0.8" fill="none"/><circle cx="14" cy="3" r="0.9" fill="#444"/><circle cx="14" cy="7" r="1.1" fill="#444"/></svg>
</body></html>
